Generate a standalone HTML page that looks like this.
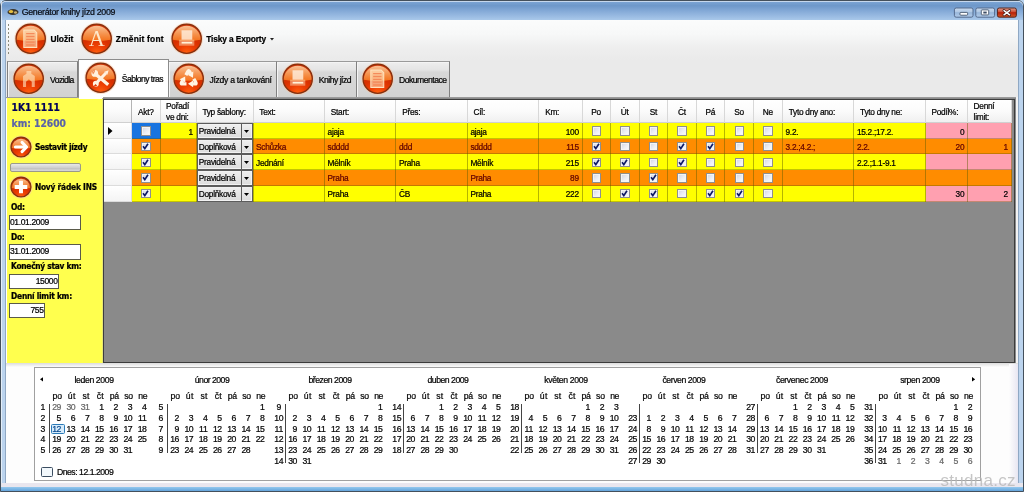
<!DOCTYPE html><html lang="cs"><head><meta charset="utf-8"><title>Generátor knihy jízd 2009</title><style>
*{box-sizing:border-box;margin:0;padding:0}
html,body{width:1024px;height:492px;overflow:hidden;background:#b9d3ee}
body{position:relative;font-family:'Liberation Sans', 'DejaVu Sans', sans-serif;font-size:8px;color:#000;filter:blur(0.45px)}
.a{position:absolute}
.t{position:absolute;white-space:nowrap;line-height:1;-webkit-text-stroke:0.22px currentColor}
</style></head><body>
<div class="a" style="left:0px;top:0px;width:1024px;height:492px;background:#bcd4ee;border:1px solid #44505c;border-radius:6px 6px 0 0;"></div>
<div class="a" style="left:1px;top:1px;width:1022px;height:19px;background:linear-gradient(#7ea6d6 0%,#6e98ca 25%,#86abd8 55%,#a9c8ea 100%);border-radius:5px 5px 0 0;box-shadow:inset 0 0.8px 0 rgba(255,255,255,0.75);"></div>
<div class="a" style="left:1px;top:1px;width:0.8px;height:490px;background:rgba(255,255,255,0.6);"></div>
<div class="a" style="left:6px;top:20px;width:1012px;height:465px;background:#f1f1f1;"></div>
<div class="a" style="left:5px;top:20px;width:1px;height:466px;background:#8fa8c4;"></div>
<div class="a" style="left:1018px;top:20px;width:1px;height:466px;background:#8fa8c4;"></div>
<div class="a" style="left:5px;top:485px;width:1014px;height:1px;background:#8fa8c4;"></div>
<svg class="a" style="left:7px;top:8px" width="12" height="8" viewBox="0 0 12 8"><ellipse cx="6" cy="4" rx="5.5" ry="3" fill="#3a3428"/><ellipse cx="4" cy="3.5" rx="2.2" ry="1.5" fill="#e8c040"/><ellipse cx="8.5" cy="4.5" rx="1.6" ry="1.2" fill="#c8b070"/></svg>
<div class="t" style="left:21.7px;top:8.1px;font-size:8.8px;color:#080c14;letter-spacing:-0.29px;">Generátor knihy jízd 2009</div>
<svg class="a" style="left:950px;top:5px" width="70" height="16" viewBox="950 5 70 16"><defs><linearGradient id="cbb" x1="0" y1="0" x2="0" y2="1"><stop offset="0" stop-color="#c9daee"/><stop offset="0.45" stop-color="#b0c8e4"/><stop offset="0.5" stop-color="#98b6da"/><stop offset="1" stop-color="#b2ccea"/></linearGradient><linearGradient id="cbr" x1="0" y1="0" x2="0" y2="1"><stop offset="0" stop-color="#e0a090"/><stop offset="0.45" stop-color="#cc4a30"/><stop offset="0.5" stop-color="#b82008"/><stop offset="1" stop-color="#d05828"/></linearGradient></defs><rect x="954.4" y="8" width="18.6" height="9.2" rx="1.8" fill="url(#cbb)" stroke="#4d6284" stroke-width="0.9"/><rect x="975.8" y="8" width="18.8" height="9.2" rx="1.8" fill="url(#cbb)" stroke="#4d6284" stroke-width="0.9"/><rect x="997.4" y="8" width="19" height="9.2" rx="1.8" fill="url(#cbr)" stroke="#4a1c14" stroke-width="0.9"/><rect x="960" y="12.4" width="7.6" height="2.8" rx="0.8" fill="#fff" stroke="#35455c" stroke-width="0.8"/><rect x="981.3" y="9.9" width="7.4" height="5" rx="0.6" fill="#fff" stroke="#35455c" stroke-width="0.8"/><rect x="983.3" y="11.6" width="3.4" height="1.9" fill="#3c4c64"/><path d="M1004 10.6 L1009.6 14.8 M1009.6 10.6 L1004 14.8" stroke="#3a1410" stroke-width="2.8" stroke-linecap="round"/><path d="M1004 10.6 L1009.6 14.8 M1009.6 10.6 L1004 14.8" stroke="#fff" stroke-width="1.5" stroke-linecap="round"/></svg>
<div class="a" style="left:6px;top:20px;width:1012px;height:40px;background:linear-gradient(#fbfcfc 0%,#f7f8f8 35%,#eeeeee 70%,#eaeaea 100%);"></div>
<div class="a" style="left:8px;top:24px;width:1px;height:1.5px;background:#8a8a7a;"></div>
<div class="a" style="left:8px;top:28px;width:1px;height:1.5px;background:#8a8a7a;"></div>
<div class="a" style="left:8px;top:32px;width:1px;height:1.5px;background:#8a8a7a;"></div>
<div class="a" style="left:8px;top:36px;width:1px;height:1.5px;background:#8a8a7a;"></div>
<div class="a" style="left:8px;top:40px;width:1px;height:1.5px;background:#8a8a7a;"></div>
<div class="a" style="left:8px;top:44px;width:1px;height:1.5px;background:#8a8a7a;"></div>
<div class="a" style="left:8px;top:48px;width:1px;height:1.5px;background:#8a8a7a;"></div>
<div class="a" style="left:8px;top:52px;width:1px;height:1.5px;background:#8a8a7a;"></div>
<svg class="a" style="left:14px;top:22.2px" width="33.4" height="33.4" viewBox="-16.7 -16.7 33.4 33.4"><defs><radialGradient id="g1" cx="0.5" cy="1.0" r="0.75"><stop offset="0" stop-color="#ff6210"/><stop offset="0.35" stop-color="#ee4004"/><stop offset="0.7" stop-color="#d83000"/><stop offset="1" stop-color="#cc3204"/></radialGradient><linearGradient id="h1" x1="0" y1="0" x2="0" y2="1"><stop offset="0" stop-color="#ffd0a4" stop-opacity="0.9"/><stop offset="1" stop-color="#ff8c28" stop-opacity="0.72"/></linearGradient></defs><circle r="16.3" fill="#f8c8a8" opacity="0.55"/><circle r="14.65" fill="url(#g1)" stroke="#84300e" stroke-width="1.3"/><path d="M-13.9 1 A13.9 13.9 0 0 1 13.9 1 Q0 3.344 -13.9 1Z" fill="url(#h1)"/><g transform="scale(1.01333)"><path d="M-6.8 -8.6 H3.4 L6 -6 V8.6 H-6.8Z" fill="#ffe6c4" fill-opacity="0.62" stroke="#ffe6c4" stroke-opacity="0.95" stroke-width="1"/><g stroke="#f48858" stroke-width="1.3" opacity="0.95"><path d="M-4.5 -5H3.8M-4.5 -2.2H3.8M-4.5 0.6H3.8M-4.5 3.4H3.8M-4.5 6.2H3.8"/></g></g></svg>
<svg class="a" style="left:79.7px;top:22.2px" width="33.4" height="33.4" viewBox="-16.7 -16.7 33.4 33.4"><defs><radialGradient id="g2" cx="0.5" cy="1.0" r="0.75"><stop offset="0" stop-color="#ff6210"/><stop offset="0.35" stop-color="#ee4004"/><stop offset="0.7" stop-color="#d83000"/><stop offset="1" stop-color="#cc3204"/></radialGradient><linearGradient id="h2" x1="0" y1="0" x2="0" y2="1"><stop offset="0" stop-color="#ffd0a4" stop-opacity="0.9"/><stop offset="1" stop-color="#ff8c28" stop-opacity="0.72"/></linearGradient></defs><circle r="16.3" fill="#f8c8a8" opacity="0.55"/><circle r="14.65" fill="url(#g2)" stroke="#84300e" stroke-width="1.3"/><path d="M-13.9 1 A13.9 13.9 0 0 1 13.9 1 Q0 3.344 -13.9 1Z" fill="url(#h2)"/><g transform="scale(1.01333)"><text x="0" y="7.5" text-anchor="middle" font-family="'Liberation Serif',serif" font-size="22" fill="#ffedd0" opacity="0.95">A</text></g></svg>
<svg class="a" style="left:169.8px;top:22.2px" width="33.4" height="33.4" viewBox="-16.7 -16.7 33.4 33.4"><defs><radialGradient id="g3" cx="0.5" cy="1.0" r="0.75"><stop offset="0" stop-color="#ff6210"/><stop offset="0.35" stop-color="#ee4004"/><stop offset="0.7" stop-color="#d83000"/><stop offset="1" stop-color="#cc3204"/></radialGradient><linearGradient id="h3" x1="0" y1="0" x2="0" y2="1"><stop offset="0" stop-color="#ffd0a4" stop-opacity="0.9"/><stop offset="1" stop-color="#ff8c28" stop-opacity="0.72"/></linearGradient></defs><circle r="16.3" fill="#f8c8a8" opacity="0.55"/><circle r="14.65" fill="url(#g3)" stroke="#84300e" stroke-width="1.3"/><path d="M-13.9 1 A13.9 13.9 0 0 1 13.9 1 Q0 3.344 -13.9 1Z" fill="url(#h3)"/><g transform="scale(1.01333)"><rect x="-5.1" y="-8.3" width="10.6" height="9.3" fill="#fff0e0" fill-opacity="0.8"/><rect x="-7.5" y="1" width="15" height="5.9" fill="#ffe6c4" fill-opacity="0.45"/><rect x="-5" y="3.1" width="10.5" height="1.7" fill="#fff2d8"/></g></svg>
<div class="t" style="left:50.4px;top:35.1px;font-size:8.4px;font-weight:bold;color:#000;letter-spacing:0.034px;">Uložit</div>
<div class="t" style="left:115.8px;top:35.1px;font-size:8.4px;font-weight:bold;color:#000;letter-spacing:0.219px;">Změnit font</div>
<div class="t" style="left:206.3px;top:35.1px;font-size:8.4px;font-weight:bold;color:#000;letter-spacing:-0.138px;">Tisky a Exporty</div>
<svg class="a" style="left:269.8px;top:38.4px" width="4" height="2.6" viewBox="0 0 4 2.6"><path d="M0 0 H4 L2 2.6Z" fill="#222"/></svg>
<div class="a" style="left:6px;top:60px;width:1012px;height:38px;background:#eaeaea;"></div>
<div class="a" style="left:6.5px;top:61px;width:71.5px;height:36.7px;background:linear-gradient(#eeeeee 0%,#e4e4e4 22%,#d8d8d8 28%,#d2d2d2 100%);border:1px solid #808080;border-top-color:#9a9a9a;border-bottom:none;box-shadow:inset 1px 1px 0 #f4f4f4;"></div>
<div class="a" style="left:167.5px;top:61px;width:109px;height:36.7px;background:linear-gradient(#eeeeee 0%,#e4e4e4 22%,#d8d8d8 28%,#d2d2d2 100%);border:1px solid #808080;border-top-color:#9a9a9a;border-bottom:none;box-shadow:inset 1px 1px 0 #f4f4f4;"></div>
<div class="a" style="left:276px;top:61px;width:80.5px;height:36.7px;background:linear-gradient(#eeeeee 0%,#e4e4e4 22%,#d8d8d8 28%,#d2d2d2 100%);border:1px solid #808080;border-top-color:#9a9a9a;border-bottom:none;box-shadow:inset 1px 1px 0 #f4f4f4;"></div>
<div class="a" style="left:356px;top:61px;width:94px;height:36.7px;background:linear-gradient(#eeeeee 0%,#e4e4e4 22%,#d8d8d8 28%,#d2d2d2 100%);border:1px solid #808080;border-top-color:#9a9a9a;border-bottom:none;box-shadow:inset 1px 1px 0 #f4f4f4;"></div>
<div class="a" style="left:77.5px;top:59.3px;width:91px;height:39px;background:#fff;border:1px solid #8c8c8c;border-bottom:none;"></div>
<svg class="a" style="left:11.8px;top:62.1px" width="33.4" height="33.4" viewBox="-16.7 -16.7 33.4 33.4"><defs><radialGradient id="g4" cx="0.5" cy="1.0" r="0.75"><stop offset="0" stop-color="#ff6210"/><stop offset="0.35" stop-color="#ee4004"/><stop offset="0.7" stop-color="#d83000"/><stop offset="1" stop-color="#cc3204"/></radialGradient><linearGradient id="h4" x1="0" y1="0" x2="0" y2="1"><stop offset="0" stop-color="#ffd0a4" stop-opacity="0.9"/><stop offset="1" stop-color="#ff8c28" stop-opacity="0.72"/></linearGradient></defs><circle r="16.3" fill="#f8c8a8" opacity="0.55"/><circle r="14.65" fill="url(#g4)" stroke="#84300e" stroke-width="1.3"/><path d="M-13.9 1 A13.9 13.9 0 0 1 13.9 1 Q0 3.344 -13.9 1Z" fill="url(#h4)"/><g transform="scale(1.01333)"><g fill="#ffe6c4" fill-opacity="0.62"><path d="M-5.6 8.2 V-2.6 L-2.2 -5 V-7.7 H2.6 V-5 L6 -2.6 V8.2 H3 V3 L0.2 0.6 L-2.6 3 V8.2Z"/></g></g></svg>
<svg class="a" style="left:83.5px;top:60.8px" width="33.4" height="33.4" viewBox="-16.7 -16.7 33.4 33.4"><defs><radialGradient id="g5" cx="0.5" cy="1.0" r="0.75"><stop offset="0" stop-color="#ff6210"/><stop offset="0.35" stop-color="#ee4004"/><stop offset="0.7" stop-color="#d83000"/><stop offset="1" stop-color="#cc3204"/></radialGradient><linearGradient id="h5" x1="0" y1="0" x2="0" y2="1"><stop offset="0" stop-color="#ffd0a4" stop-opacity="0.9"/><stop offset="1" stop-color="#ff8c28" stop-opacity="0.72"/></linearGradient></defs><circle r="16.3" fill="#f8c8a8" opacity="0.55"/><circle r="14.65" fill="url(#g5)" stroke="#84300e" stroke-width="1.3"/><path d="M-13.9 1 A13.9 13.9 0 0 1 13.9 1 Q0 3.344 -13.9 1Z" fill="url(#h5)"/><g transform="scale(1.01333)"><g stroke="#fff2e0" stroke-linecap="butt" fill="none"><path d="M-5.2 -3.6 L7.4 7" stroke-width="3.3"/><path d="M5.2 -4.6 L-4.6 5.6" stroke-width="2.9"/></g><g fill="#fff2e0"><circle cx="-5.8" cy="-4.2" r="3.3"/><circle cx="-4.8" cy="6" r="2.9"/><path d="M3.6 -5.8 L7.8 -7.4 L6.6 -3Z"/></g><path d="M-9.5 -8 L-6 -5.2 L-7.6 -3.2 Z M-8.6 -7.6 L-5.8 -8.6 L-5.6 -5.4Z" fill="#f29058"/><path d="M-7.6 9 L-5 6.2 L-3.4 8.2Z" fill="#e23804"/></g></svg>
<svg class="a" style="left:172px;top:62.1px" width="33.4" height="33.4" viewBox="-16.7 -16.7 33.4 33.4"><defs><radialGradient id="g6" cx="0.5" cy="1.0" r="0.75"><stop offset="0" stop-color="#ff6210"/><stop offset="0.35" stop-color="#ee4004"/><stop offset="0.7" stop-color="#d83000"/><stop offset="1" stop-color="#cc3204"/></radialGradient><linearGradient id="h6" x1="0" y1="0" x2="0" y2="1"><stop offset="0" stop-color="#ffd0a4" stop-opacity="0.9"/><stop offset="1" stop-color="#ff8c28" stop-opacity="0.72"/></linearGradient></defs><circle r="16.3" fill="#f8c8a8" opacity="0.55"/><circle r="14.65" fill="url(#g6)" stroke="#84300e" stroke-width="1.3"/><path d="M-13.9 1 A13.9 13.9 0 0 1 13.9 1 Q0 3.344 -13.9 1Z" fill="url(#h6)"/><g transform="scale(1.01333)"><g transform="translate(0,0.6)"><g><path d="M-2.81 -4.14 L-0.9 -7.6 Q0 -9.2 0.9 -7.6 L1.9 -5.8" fill="none" stroke="#fff4e4" stroke-width="3.3"/><path d="M4.6 -7.7 L-1.1 -4.4 L4.2 -1.6 Z" fill="#fff4e4"/></g><g transform="rotate(120)"><path d="M-2.81 -4.14 L-0.9 -7.6 Q0 -9.2 0.9 -7.6 L1.9 -5.8" fill="none" stroke="#fff4e4" stroke-width="3.3"/><path d="M4.6 -7.7 L-1.1 -4.4 L4.2 -1.6 Z" fill="#fff4e4"/></g><g transform="rotate(240)"><path d="M-2.81 -4.14 L-0.9 -7.6 Q0 -9.2 0.9 -7.6 L1.9 -5.8" fill="none" stroke="#fff4e4" stroke-width="3.3"/><path d="M4.6 -7.7 L-1.1 -4.4 L4.2 -1.6 Z" fill="#fff4e4"/></g></g></g></svg>
<svg class="a" style="left:280.6px;top:62.3px" width="33.4" height="33.4" viewBox="-16.7 -16.7 33.4 33.4"><defs><radialGradient id="g7" cx="0.5" cy="1.0" r="0.75"><stop offset="0" stop-color="#ff6210"/><stop offset="0.35" stop-color="#ee4004"/><stop offset="0.7" stop-color="#d83000"/><stop offset="1" stop-color="#cc3204"/></radialGradient><linearGradient id="h7" x1="0" y1="0" x2="0" y2="1"><stop offset="0" stop-color="#ffd0a4" stop-opacity="0.9"/><stop offset="1" stop-color="#ff8c28" stop-opacity="0.72"/></linearGradient></defs><circle r="16.3" fill="#f8c8a8" opacity="0.55"/><circle r="14.65" fill="url(#g7)" stroke="#84300e" stroke-width="1.3"/><path d="M-13.9 1 A13.9 13.9 0 0 1 13.9 1 Q0 3.344 -13.9 1Z" fill="url(#h7)"/><g transform="scale(1.01333)"><rect x="-5.1" y="-8.3" width="10.6" height="9.3" fill="#fff0e0" fill-opacity="0.8"/><rect x="-7.5" y="1" width="15" height="5.9" fill="#ffe6c4" fill-opacity="0.45"/><rect x="-5" y="3.1" width="10.5" height="1.7" fill="#fff2d8"/></g></svg>
<svg class="a" style="left:360.8px;top:62.3px" width="33.4" height="33.4" viewBox="-16.7 -16.7 33.4 33.4"><defs><radialGradient id="g8" cx="0.5" cy="1.0" r="0.75"><stop offset="0" stop-color="#ff6210"/><stop offset="0.35" stop-color="#ee4004"/><stop offset="0.7" stop-color="#d83000"/><stop offset="1" stop-color="#cc3204"/></radialGradient><linearGradient id="h8" x1="0" y1="0" x2="0" y2="1"><stop offset="0" stop-color="#ffd0a4" stop-opacity="0.9"/><stop offset="1" stop-color="#ff8c28" stop-opacity="0.72"/></linearGradient></defs><circle r="16.3" fill="#f8c8a8" opacity="0.55"/><circle r="14.65" fill="url(#g8)" stroke="#84300e" stroke-width="1.3"/><path d="M-13.9 1 A13.9 13.9 0 0 1 13.9 1 Q0 3.344 -13.9 1Z" fill="url(#h8)"/><g transform="scale(1.01333)"><path d="M-6.8 -8.6 H3.4 L6 -6 V8.6 H-6.8Z" fill="#ffe6c4" fill-opacity="0.62" stroke="#ffe6c4" stroke-opacity="0.95" stroke-width="1"/><g stroke="#f48858" stroke-width="1.3" opacity="0.95"><path d="M-4.5 -5H3.8M-4.5 -2.2H3.8M-4.5 0.6H3.8M-4.5 3.4H3.8M-4.5 6.2H3.8"/></g></g></svg>
<div class="t" style="left:50px;top:76px;font-size:8.6px;color:#000;letter-spacing:-0.56px;">Vozidla</div>
<div class="t" style="left:121.8px;top:74.8px;font-size:8.6px;color:#000;letter-spacing:-0.548px;">Šablony tras</div>
<div class="t" style="left:209.5px;top:76px;font-size:8.6px;color:#000;letter-spacing:-0.288px;">Jízdy a tankování</div>
<div class="t" style="left:318.8px;top:76px;font-size:8.6px;color:#000;letter-spacing:-0.507px;">Knihy jízd</div>
<div class="t" style="left:399px;top:76px;font-size:8.6px;color:#000;letter-spacing:-0.503px;">Dokumentace</div>
<div class="a" style="left:6px;top:97.3px;width:1012px;height:1.2px;background:#9a9a9a;"></div>
<div class="a" style="left:6px;top:98.5px;width:1012px;height:265px;background:#fff;"></div>
<div class="a" style="left:6.5px;top:97.8px;width:96px;height:265.5px;background:#ffff4e;"></div>
<div class="a" style="left:78.5px;top:97px;width:24px;height:2px;background:#fff;"></div>
<div class="t" style="left:11.6px;top:102.5px;font-size:10.2px;font-weight:bold;font-family:'DejaVu Sans Condensed', 'DejaVu Sans', 'Liberation Sans', sans-serif;color:#00005a;letter-spacing:-0.033px;">1K1 1111</div>
<div class="t" style="left:11.6px;top:119.3px;font-size:10.2px;font-weight:bold;font-family:'DejaVu Sans Condensed', 'DejaVu Sans', 'Liberation Sans', sans-serif;color:#5a64a8;letter-spacing:0.001px;">km: 12600</div>
<svg class="a" style="left:9.2px;top:135.1px" width="24" height="24" viewBox="-12 -12 24 24"><defs><radialGradient id="g9" cx="0.5" cy="1.0" r="0.75"><stop offset="0" stop-color="#ff6210"/><stop offset="0.35" stop-color="#ee4004"/><stop offset="0.7" stop-color="#d83000"/><stop offset="1" stop-color="#cc3204"/></radialGradient><linearGradient id="h9" x1="0" y1="0" x2="0" y2="1"><stop offset="0" stop-color="#ffd0a4" stop-opacity="0.9"/><stop offset="1" stop-color="#ff8c28" stop-opacity="0.72"/></linearGradient></defs><circle r="11.6" fill="#f8c8a8" opacity="0.55"/><circle r="9.95" fill="url(#g9)" stroke="#84300e" stroke-width="1.3"/><path d="M-9.2 1 A9.2 9.2 0 0 1 9.2 1 Q0 2.31 -9.2 1Z" fill="url(#h9)"/><g transform="scale(0.7)"><g fill="none" stroke="#fff" stroke-width="4.4" stroke-linecap="round" stroke-linejoin="round"><path d="M-8 0 H7"/><path d="M1.5 -6.5 L8 0 L1.5 6.5"/></g></g></svg>
<div class="t" style="left:34.9px;top:142.75px;font-size:8.3px;font-weight:bold;font-family:'DejaVu Sans Condensed', 'DejaVu Sans', 'Liberation Sans', sans-serif;color:#000;letter-spacing:-0.318px;">Sestavit jízdy</div>
<div class="a" style="left:9.5px;top:162.6px;width:71px;height:9.6px;background:linear-gradient(#e8e8e8,#d0d0d0 50%,#c0c0c0 55%,#d8d8d8);border:1px solid #9a9a8a;border-radius:2px;"></div>
<svg class="a" style="left:9.2px;top:175.4px" width="24" height="24" viewBox="-12 -12 24 24"><defs><radialGradient id="g10" cx="0.5" cy="1.0" r="0.75"><stop offset="0" stop-color="#ff6210"/><stop offset="0.35" stop-color="#ee4004"/><stop offset="0.7" stop-color="#d83000"/><stop offset="1" stop-color="#cc3204"/></radialGradient><linearGradient id="h10" x1="0" y1="0" x2="0" y2="1"><stop offset="0" stop-color="#ffd0a4" stop-opacity="0.9"/><stop offset="1" stop-color="#ff8c28" stop-opacity="0.72"/></linearGradient></defs><circle r="11.6" fill="#f8c8a8" opacity="0.55"/><circle r="9.95" fill="url(#g10)" stroke="#84300e" stroke-width="1.3"/><path d="M-9.2 1 A9.2 9.2 0 0 1 9.2 1 Q0 2.31 -9.2 1Z" fill="url(#h10)"/><g transform="scale(0.7)"><g stroke="#fff" stroke-width="5.6" stroke-linecap="butt"><path d="M-9 0H9M0 -9V9"/></g></g></svg>
<div class="t" style="left:34.9px;top:183.25px;font-size:8.3px;font-weight:bold;font-family:'DejaVu Sans Condensed', 'DejaVu Sans', 'Liberation Sans', sans-serif;color:#000;letter-spacing:-0.2px;">Nový řádek INS</div>
<div class="t" style="left:11.1px;top:203.45px;font-size:8.3px;font-weight:bold;font-family:'DejaVu Sans Condensed', 'DejaVu Sans', 'Liberation Sans', sans-serif;color:#000;letter-spacing:-0.396px;">Od:</div>
<div class="a" style="left:8.7px;top:214.5px;width:72px;height:15.5px;background:#fff;border:1px solid #5a5a4a;"></div>
<div class="t" style="left:10px;top:217.75px;font-size:8.5px;color:#000;letter-spacing:-0.365px;">01.01.2009</div>
<div class="t" style="left:11.1px;top:233.05px;font-size:8.3px;font-weight:bold;font-family:'DejaVu Sans Condensed', 'DejaVu Sans', 'Liberation Sans', sans-serif;color:#000;letter-spacing:-0.376px;">Do:</div>
<div class="a" style="left:8.7px;top:244.1px;width:72px;height:15.5px;background:#fff;border:1px solid #5a5a4a;"></div>
<div class="t" style="left:10px;top:247.25px;font-size:8.5px;color:#000;letter-spacing:-0.365px;">31.01.2009</div>
<div class="t" style="left:11.1px;top:262.45px;font-size:8.3px;font-weight:bold;font-family:'DejaVu Sans Condensed', 'DejaVu Sans', 'Liberation Sans', sans-serif;color:#000;letter-spacing:-0.268px;">Konečný stav km:</div>
<div class="a" style="left:8.7px;top:273.5px;width:50.8px;height:15.2px;background:#fff;border:1px solid #5a5a4a;"></div>
<div class="t" style="left:35.7px;top:276.75px;font-size:8.5px;color:#000;letter-spacing:-0.348px;">15000</div>
<div class="t" style="left:11.1px;top:291.85px;font-size:8.3px;font-weight:bold;font-family:'DejaVu Sans Condensed', 'DejaVu Sans', 'Liberation Sans', sans-serif;color:#000;letter-spacing:-0.239px;">Denní limit km:</div>
<div class="a" style="left:8.7px;top:302.6px;width:36.3px;height:15.6px;background:#fff;border:1px solid #5a5a4a;"></div>
<div class="t" style="left:30.4px;top:305.95px;font-size:8.5px;color:#000;letter-spacing:-0.329px;">755</div>
<div class="a" style="left:102.3px;top:97.5px;width:913.7px;height:266px;background:#8a8a8a;border:1px solid #8a8a8a;border-left-color:#e8e870;box-shadow:inset 0 0 0 1px #3c3c3c;"></div>
<div class="a" style="left:1016px;top:97px;width:2px;height:267px;background:#f2f2f2;"></div>
<div class="a" style="left:104px;top:99.5px;width:907.8px;height:23.7px;background:linear-gradient(#ffffff 0%,#fbfbfb 50%,#f0f0f0 100%);border-bottom:1px solid #d0d0d0;"></div>
<div class="a" style="left:131.3px;top:99.5px;width:1px;height:23.7px;background:#b4b4b4;"></div>
<div class="a" style="left:159.6px;top:99.5px;width:1px;height:23.7px;background:#d8d8d8;"></div>
<div class="t" style="left:131.665px;top:107.5px;width:28.3px;text-align:center;font-size:8.3px;color:#000;letter-spacing:-0.27px;">Akt?</div>
<div class="a" style="left:195.6px;top:99.5px;width:1px;height:23.7px;background:#d8d8d8;"></div>
<div class="t" style="left:166.1px;top:102.2px;font-size:8.3px;color:#000;letter-spacing:-0.27px;">Pořadí</div>
<div class="t" style="left:166.1px;top:112.8px;font-size:8.3px;color:#000;letter-spacing:-0.27px;">ve dni:</div>
<div class="a" style="left:252.5px;top:99.5px;width:1px;height:23.7px;background:#d8d8d8;"></div>
<div class="t" style="left:202.4px;top:107.5px;font-size:8.3px;color:#000;letter-spacing:-0.27px;">Typ šablony:</div>
<div class="a" style="left:324px;top:99.5px;width:1px;height:23.7px;background:#d8d8d8;"></div>
<div class="t" style="left:259.3px;top:107.5px;font-size:8.3px;color:#000;letter-spacing:-0.27px;">Text:</div>
<div class="a" style="left:395.4px;top:99.5px;width:1px;height:23.7px;background:#d8d8d8;"></div>
<div class="t" style="left:330.8px;top:107.5px;font-size:8.3px;color:#000;letter-spacing:-0.27px;">Start:</div>
<div class="a" style="left:466.8px;top:99.5px;width:1px;height:23.7px;background:#d8d8d8;"></div>
<div class="t" style="left:402.2px;top:107.5px;font-size:8.3px;color:#000;letter-spacing:-0.27px;">Přes:</div>
<div class="a" style="left:538.4px;top:99.5px;width:1px;height:23.7px;background:#d8d8d8;"></div>
<div class="t" style="left:473.6px;top:107.5px;font-size:8.3px;color:#000;letter-spacing:-0.27px;">Cíl:</div>
<div class="a" style="left:581.6px;top:99.5px;width:1px;height:23.7px;background:#d8d8d8;"></div>
<div class="t" style="left:545.2px;top:107.5px;font-size:8.3px;color:#000;letter-spacing:-0.27px;">Km:</div>
<div class="a" style="left:610px;top:99.5px;width:1px;height:23.7px;background:#d8d8d8;"></div>
<div class="t" style="left:581.965px;top:107.5px;width:28.4px;text-align:center;font-size:8.3px;color:#000;letter-spacing:-0.27px;">Po</div>
<div class="a" style="left:638.7px;top:99.5px;width:1px;height:23.7px;background:#d8d8d8;"></div>
<div class="t" style="left:610.365px;top:107.5px;width:28.7px;text-align:center;font-size:8.3px;color:#000;letter-spacing:-0.27px;">Út</div>
<div class="a" style="left:667.4px;top:99.5px;width:1px;height:23.7px;background:#d8d8d8;"></div>
<div class="t" style="left:639.065px;top:107.5px;width:28.7px;text-align:center;font-size:8.3px;color:#000;letter-spacing:-0.27px;">St</div>
<div class="a" style="left:695.6px;top:99.5px;width:1px;height:23.7px;background:#d8d8d8;"></div>
<div class="t" style="left:667.765px;top:107.5px;width:28.2px;text-align:center;font-size:8.3px;color:#000;letter-spacing:-0.27px;">Čt</div>
<div class="a" style="left:724.4px;top:99.5px;width:1px;height:23.7px;background:#d8d8d8;"></div>
<div class="t" style="left:695.965px;top:107.5px;width:28.8px;text-align:center;font-size:8.3px;color:#000;letter-spacing:-0.27px;">Pá</div>
<div class="a" style="left:753.1px;top:99.5px;width:1px;height:23.7px;background:#d8d8d8;"></div>
<div class="t" style="left:724.765px;top:107.5px;width:28.7px;text-align:center;font-size:8.3px;color:#000;letter-spacing:-0.27px;">So</div>
<div class="a" style="left:781.9px;top:99.5px;width:1px;height:23.7px;background:#d8d8d8;"></div>
<div class="t" style="left:753.465px;top:107.5px;width:28.8px;text-align:center;font-size:8.3px;color:#000;letter-spacing:-0.27px;">Ne</div>
<div class="a" style="left:853.3px;top:99.5px;width:1px;height:23.7px;background:#d8d8d8;"></div>
<div class="t" style="left:788.7px;top:107.5px;font-size:8.3px;color:#000;letter-spacing:-0.27px;">Tyto dny ano:</div>
<div class="a" style="left:924.7px;top:99.5px;width:1px;height:23.7px;background:#d8d8d8;"></div>
<div class="t" style="left:860.1px;top:107.5px;font-size:8.3px;color:#000;letter-spacing:-0.27px;">Tyto dny ne:</div>
<div class="a" style="left:967.1px;top:99.5px;width:1px;height:23.7px;background:#d8d8d8;"></div>
<div class="t" style="left:931.5px;top:107.5px;font-size:8.3px;color:#000;letter-spacing:-0.27px;">Podíl%:</div>
<div class="a" style="left:1010.8px;top:99.5px;width:1px;height:23.7px;background:#d8d8d8;"></div>
<div class="t" style="left:973.6px;top:102.2px;font-size:8.3px;color:#000;letter-spacing:-0.27px;">Denní</div>
<div class="t" style="left:973.6px;top:112.8px;font-size:8.3px;color:#000;letter-spacing:-0.27px;">limit:</div>
<div class="a" style="left:104px;top:123.2px;width:28.3px;height:15.7px;background:linear-gradient(#fff,#f4f4f4);border-bottom:1px solid #dcdcdc;border-right:1px solid #dcdcdc;"></div>
<svg class="a" style="left:108px;top:127.05px" width="5" height="8"><path d="M0 0 L4.5 4 L0 8Z" fill="#000"/></svg>
<div class="a" style="left:132.3px;top:123.2px;width:879.5px;height:15.7px;background:#ffff00;"></div>
<div class="a" style="left:925.7px;top:123.2px;width:86.1px;height:15.7px;background:#ffa0b0;"></div>
<div class="a" style="left:132.3px;top:123.2px;width:28.3px;height:15.7px;background:#1874e0;"></div>
<div class="a" style="left:159.6px;top:123.2px;width:1px;height:15.7px;background:rgba(90,90,0,0.45);"></div>
<div class="a" style="left:195.6px;top:123.2px;width:1px;height:15.7px;background:rgba(90,90,0,0.45);"></div>
<div class="a" style="left:252.5px;top:123.2px;width:1px;height:15.7px;background:rgba(90,90,0,0.45);"></div>
<div class="a" style="left:324px;top:123.2px;width:1px;height:15.7px;background:rgba(90,90,0,0.45);"></div>
<div class="a" style="left:395.4px;top:123.2px;width:1px;height:15.7px;background:rgba(90,90,0,0.45);"></div>
<div class="a" style="left:466.8px;top:123.2px;width:1px;height:15.7px;background:rgba(90,90,0,0.45);"></div>
<div class="a" style="left:538.4px;top:123.2px;width:1px;height:15.7px;background:rgba(90,90,0,0.45);"></div>
<div class="a" style="left:581.6px;top:123.2px;width:1px;height:15.7px;background:rgba(90,90,0,0.45);"></div>
<div class="a" style="left:610px;top:123.2px;width:1px;height:15.7px;background:rgba(90,90,0,0.45);"></div>
<div class="a" style="left:638.7px;top:123.2px;width:1px;height:15.7px;background:rgba(90,90,0,0.45);"></div>
<div class="a" style="left:667.4px;top:123.2px;width:1px;height:15.7px;background:rgba(90,90,0,0.45);"></div>
<div class="a" style="left:695.6px;top:123.2px;width:1px;height:15.7px;background:rgba(90,90,0,0.45);"></div>
<div class="a" style="left:724.4px;top:123.2px;width:1px;height:15.7px;background:rgba(90,90,0,0.45);"></div>
<div class="a" style="left:753.1px;top:123.2px;width:1px;height:15.7px;background:rgba(90,90,0,0.45);"></div>
<div class="a" style="left:781.9px;top:123.2px;width:1px;height:15.7px;background:rgba(90,90,0,0.45);"></div>
<div class="a" style="left:853.3px;top:123.2px;width:1px;height:15.7px;background:rgba(90,90,0,0.45);"></div>
<div class="a" style="left:924.7px;top:123.2px;width:1px;height:15.7px;background:rgba(90,90,0,0.45);"></div>
<div class="a" style="left:967.1px;top:123.2px;width:1px;height:15.7px;background:rgba(90,90,0,0.45);"></div>
<div class="a" style="left:1010.8px;top:123.2px;width:1px;height:15.7px;background:rgba(90,90,0,0.45);"></div>
<div class="a" style="left:132.3px;top:137.9px;width:879.5px;height:1px;background:rgba(90,90,0,0.35);"></div>
<div class="a" style="left:141.25px;top:126.35px;width:9.4px;height:9.4px;border:1px solid #8e8f8f;background:linear-gradient(135deg,#d2d4e0,#eceef4 55%,#fcfcfe);box-shadow:inset 0 0 0 1px #f4f4f4"></div>
<div class="t" style="right:831.27px;top:127.5px;font-size:8.3px;color:#000;letter-spacing:-0.27px;">1</div>
<div class="a" style="left:196.6px;top:122.9px;width:56.6px;height:16px;background:linear-gradient(#efefef,#e6e6e6 50%,#dcdcdc);border:1px solid #5c5c5c;box-shadow:inset 0 0 0 1px #f2f2f2;"></div>
<div class="a" style="left:240.9px;top:123.2px;width:1px;height:15.7px;background:#5c5c5c;"></div>
<svg class="a" style="left:244.3px;top:130.05px" width="5" height="3"><path d="M0 0 H5 L2.5 3Z" fill="#000"/></svg>
<div class="t" style="left:198.8px;top:127.3px;font-size:8.3px;color:#000;letter-spacing:-0.27px;">Pravidelná</div>
<div class="t" style="left:327.6px;top:127.5px;font-size:8.3px;color:#000;letter-spacing:-0.27px;">ajaja</div>
<div class="t" style="left:470.4px;top:127.5px;font-size:8.3px;color:#000;letter-spacing:-0.27px;">ajaja</div>
<div class="t" style="right:445.27px;top:127.5px;font-size:8.3px;color:#000;letter-spacing:-0.27px;">100</div>
<div class="a" style="left:591.6px;top:126.35px;width:9.4px;height:9.4px;border:1px solid #8e8f8f;background:linear-gradient(135deg,#d2d4e0,#eceef4 55%,#fcfcfe);box-shadow:inset 0 0 0 1px #f4f4f4"></div>
<div class="a" style="left:620.15px;top:126.35px;width:9.4px;height:9.4px;border:1px solid #8e8f8f;background:linear-gradient(135deg,#d2d4e0,#eceef4 55%,#fcfcfe);box-shadow:inset 0 0 0 1px #f4f4f4"></div>
<div class="a" style="left:648.85px;top:126.35px;width:9.4px;height:9.4px;border:1px solid #8e8f8f;background:linear-gradient(135deg,#d2d4e0,#eceef4 55%,#fcfcfe);box-shadow:inset 0 0 0 1px #f4f4f4"></div>
<div class="a" style="left:677.3px;top:126.35px;width:9.4px;height:9.4px;border:1px solid #8e8f8f;background:linear-gradient(135deg,#d2d4e0,#eceef4 55%,#fcfcfe);box-shadow:inset 0 0 0 1px #f4f4f4"></div>
<div class="a" style="left:705.8px;top:126.35px;width:9.4px;height:9.4px;border:1px solid #8e8f8f;background:linear-gradient(135deg,#d2d4e0,#eceef4 55%,#fcfcfe);box-shadow:inset 0 0 0 1px #f4f4f4"></div>
<div class="a" style="left:734.55px;top:126.35px;width:9.4px;height:9.4px;border:1px solid #8e8f8f;background:linear-gradient(135deg,#d2d4e0,#eceef4 55%,#fcfcfe);box-shadow:inset 0 0 0 1px #f4f4f4"></div>
<div class="a" style="left:763.3px;top:126.35px;width:9.4px;height:9.4px;border:1px solid #8e8f8f;background:linear-gradient(135deg,#d2d4e0,#eceef4 55%,#fcfcfe);box-shadow:inset 0 0 0 1px #f4f4f4"></div>
<div class="t" style="left:785.5px;top:127.5px;font-size:8.3px;color:#000;letter-spacing:-0.27px;">9.2.</div>
<div class="t" style="left:856.9px;top:127.5px;font-size:8.3px;color:#000;letter-spacing:-0.27px;">15.2.;17.2.</div>
<div class="t" style="right:59.77px;top:127.5px;font-size:8.3px;color:#000;letter-spacing:-0.27px;">0</div>
<div class="a" style="left:104px;top:138.9px;width:28.3px;height:15.5px;background:linear-gradient(#fff,#f4f4f4);border-bottom:1px solid #dcdcdc;border-right:1px solid #dcdcdc;"></div>
<div class="a" style="left:132.3px;top:138.9px;width:879.5px;height:15.5px;background:#ff8c00;"></div>
<div class="a" style="left:159.6px;top:138.9px;width:1px;height:15.5px;background:rgba(90,90,0,0.45);"></div>
<div class="a" style="left:195.6px;top:138.9px;width:1px;height:15.5px;background:rgba(90,90,0,0.45);"></div>
<div class="a" style="left:252.5px;top:138.9px;width:1px;height:15.5px;background:rgba(90,90,0,0.45);"></div>
<div class="a" style="left:324px;top:138.9px;width:1px;height:15.5px;background:rgba(90,90,0,0.45);"></div>
<div class="a" style="left:395.4px;top:138.9px;width:1px;height:15.5px;background:rgba(90,90,0,0.45);"></div>
<div class="a" style="left:466.8px;top:138.9px;width:1px;height:15.5px;background:rgba(90,90,0,0.45);"></div>
<div class="a" style="left:538.4px;top:138.9px;width:1px;height:15.5px;background:rgba(90,90,0,0.45);"></div>
<div class="a" style="left:581.6px;top:138.9px;width:1px;height:15.5px;background:rgba(90,90,0,0.45);"></div>
<div class="a" style="left:610px;top:138.9px;width:1px;height:15.5px;background:rgba(90,90,0,0.45);"></div>
<div class="a" style="left:638.7px;top:138.9px;width:1px;height:15.5px;background:rgba(90,90,0,0.45);"></div>
<div class="a" style="left:667.4px;top:138.9px;width:1px;height:15.5px;background:rgba(90,90,0,0.45);"></div>
<div class="a" style="left:695.6px;top:138.9px;width:1px;height:15.5px;background:rgba(90,90,0,0.45);"></div>
<div class="a" style="left:724.4px;top:138.9px;width:1px;height:15.5px;background:rgba(90,90,0,0.45);"></div>
<div class="a" style="left:753.1px;top:138.9px;width:1px;height:15.5px;background:rgba(90,90,0,0.45);"></div>
<div class="a" style="left:781.9px;top:138.9px;width:1px;height:15.5px;background:rgba(90,90,0,0.45);"></div>
<div class="a" style="left:853.3px;top:138.9px;width:1px;height:15.5px;background:rgba(90,90,0,0.45);"></div>
<div class="a" style="left:924.7px;top:138.9px;width:1px;height:15.5px;background:rgba(90,90,0,0.45);"></div>
<div class="a" style="left:967.1px;top:138.9px;width:1px;height:15.5px;background:rgba(90,90,0,0.45);"></div>
<div class="a" style="left:1010.8px;top:138.9px;width:1px;height:15.5px;background:rgba(90,90,0,0.45);"></div>
<div class="a" style="left:132.3px;top:153.4px;width:879.5px;height:1px;background:rgba(90,90,0,0.35);"></div>
<div class="a" style="left:141.25px;top:141.95px;width:9.4px;height:9.4px;border:1px solid #8e8f8f;background:linear-gradient(135deg,#d2d4e0,#eceef4 55%,#fcfcfe);box-shadow:inset 0 0 0 1px #f4f4f4"><svg class="a" style="left:0.2px;top:0.2px" width="7" height="7" viewBox="0 0 8 8"><path d="M1.2 3.6 L3.2 6.4 L6.8 0.8" fill="none" stroke="#0e1a66" stroke-width="1.9"/></svg></div>
<div class="a" style="left:196.6px;top:138.6px;width:56.6px;height:15.8px;background:linear-gradient(#efefef,#e6e6e6 50%,#dcdcdc);border:1px solid #5c5c5c;box-shadow:inset 0 0 0 1px #f2f2f2;"></div>
<div class="a" style="left:240.9px;top:138.9px;width:1px;height:15.5px;background:#5c5c5c;"></div>
<svg class="a" style="left:244.3px;top:145.65px" width="5" height="3"><path d="M0 0 H5 L2.5 3Z" fill="#000"/></svg>
<div class="t" style="left:198.8px;top:142.9px;font-size:8.3px;color:#000;letter-spacing:-0.27px;">Doplňková</div>
<div class="t" style="left:256.1px;top:143.1px;font-size:8.3px;color:#600000;letter-spacing:-0.27px;">Schůzka</div>
<div class="t" style="left:327.6px;top:143.1px;font-size:8.3px;color:#600000;letter-spacing:-0.27px;">sdddd</div>
<div class="t" style="left:399px;top:143.1px;font-size:8.3px;color:#600000;letter-spacing:-0.27px;">ddd</div>
<div class="t" style="left:470.4px;top:143.1px;font-size:8.3px;color:#600000;letter-spacing:-0.27px;">sdddd</div>
<div class="t" style="right:445.27px;top:143.1px;font-size:8.3px;color:#600000;letter-spacing:-0.27px;">115</div>
<div class="a" style="left:591.6px;top:141.95px;width:9.4px;height:9.4px;border:1px solid #8e8f8f;background:linear-gradient(135deg,#d2d4e0,#eceef4 55%,#fcfcfe);box-shadow:inset 0 0 0 1px #f4f4f4"><svg class="a" style="left:0.2px;top:0.2px" width="7" height="7" viewBox="0 0 8 8"><path d="M1.2 3.6 L3.2 6.4 L6.8 0.8" fill="none" stroke="#0e1a66" stroke-width="1.9"/></svg></div>
<div class="a" style="left:620.15px;top:141.95px;width:9.4px;height:9.4px;border:1px solid #8e8f8f;background:linear-gradient(135deg,#d2d4e0,#eceef4 55%,#fcfcfe);box-shadow:inset 0 0 0 1px #f4f4f4"></div>
<div class="a" style="left:648.85px;top:141.95px;width:9.4px;height:9.4px;border:1px solid #8e8f8f;background:linear-gradient(135deg,#d2d4e0,#eceef4 55%,#fcfcfe);box-shadow:inset 0 0 0 1px #f4f4f4"></div>
<div class="a" style="left:677.3px;top:141.95px;width:9.4px;height:9.4px;border:1px solid #8e8f8f;background:linear-gradient(135deg,#d2d4e0,#eceef4 55%,#fcfcfe);box-shadow:inset 0 0 0 1px #f4f4f4"><svg class="a" style="left:0.2px;top:0.2px" width="7" height="7" viewBox="0 0 8 8"><path d="M1.2 3.6 L3.2 6.4 L6.8 0.8" fill="none" stroke="#0e1a66" stroke-width="1.9"/></svg></div>
<div class="a" style="left:705.8px;top:141.95px;width:9.4px;height:9.4px;border:1px solid #8e8f8f;background:linear-gradient(135deg,#d2d4e0,#eceef4 55%,#fcfcfe);box-shadow:inset 0 0 0 1px #f4f4f4"><svg class="a" style="left:0.2px;top:0.2px" width="7" height="7" viewBox="0 0 8 8"><path d="M1.2 3.6 L3.2 6.4 L6.8 0.8" fill="none" stroke="#0e1a66" stroke-width="1.9"/></svg></div>
<div class="a" style="left:734.55px;top:141.95px;width:9.4px;height:9.4px;border:1px solid #8e8f8f;background:linear-gradient(135deg,#d2d4e0,#eceef4 55%,#fcfcfe);box-shadow:inset 0 0 0 1px #f4f4f4"></div>
<div class="a" style="left:763.3px;top:141.95px;width:9.4px;height:9.4px;border:1px solid #8e8f8f;background:linear-gradient(135deg,#d2d4e0,#eceef4 55%,#fcfcfe);box-shadow:inset 0 0 0 1px #f4f4f4"></div>
<div class="t" style="left:785.5px;top:143.1px;font-size:8.3px;color:#600000;letter-spacing:-0.27px;">3.2.;4.2.;</div>
<div class="t" style="left:856.9px;top:143.1px;font-size:8.3px;color:#600000;letter-spacing:-0.27px;">2.2.</div>
<div class="t" style="right:59.77px;top:143.1px;font-size:8.3px;color:#600000;letter-spacing:-0.27px;">20</div>
<div class="t" style="right:16.07px;top:143.1px;font-size:8.3px;color:#600000;letter-spacing:-0.27px;">1</div>
<div class="a" style="left:104px;top:154.4px;width:28.3px;height:15.6px;background:linear-gradient(#fff,#f4f4f4);border-bottom:1px solid #dcdcdc;border-right:1px solid #dcdcdc;"></div>
<div class="a" style="left:132.3px;top:154.4px;width:879.5px;height:15.6px;background:#ffff00;"></div>
<div class="a" style="left:925.7px;top:154.4px;width:86.1px;height:15.6px;background:#ffa0b0;"></div>
<div class="a" style="left:159.6px;top:154.4px;width:1px;height:15.6px;background:rgba(90,90,0,0.45);"></div>
<div class="a" style="left:195.6px;top:154.4px;width:1px;height:15.6px;background:rgba(90,90,0,0.45);"></div>
<div class="a" style="left:252.5px;top:154.4px;width:1px;height:15.6px;background:rgba(90,90,0,0.45);"></div>
<div class="a" style="left:324px;top:154.4px;width:1px;height:15.6px;background:rgba(90,90,0,0.45);"></div>
<div class="a" style="left:395.4px;top:154.4px;width:1px;height:15.6px;background:rgba(90,90,0,0.45);"></div>
<div class="a" style="left:466.8px;top:154.4px;width:1px;height:15.6px;background:rgba(90,90,0,0.45);"></div>
<div class="a" style="left:538.4px;top:154.4px;width:1px;height:15.6px;background:rgba(90,90,0,0.45);"></div>
<div class="a" style="left:581.6px;top:154.4px;width:1px;height:15.6px;background:rgba(90,90,0,0.45);"></div>
<div class="a" style="left:610px;top:154.4px;width:1px;height:15.6px;background:rgba(90,90,0,0.45);"></div>
<div class="a" style="left:638.7px;top:154.4px;width:1px;height:15.6px;background:rgba(90,90,0,0.45);"></div>
<div class="a" style="left:667.4px;top:154.4px;width:1px;height:15.6px;background:rgba(90,90,0,0.45);"></div>
<div class="a" style="left:695.6px;top:154.4px;width:1px;height:15.6px;background:rgba(90,90,0,0.45);"></div>
<div class="a" style="left:724.4px;top:154.4px;width:1px;height:15.6px;background:rgba(90,90,0,0.45);"></div>
<div class="a" style="left:753.1px;top:154.4px;width:1px;height:15.6px;background:rgba(90,90,0,0.45);"></div>
<div class="a" style="left:781.9px;top:154.4px;width:1px;height:15.6px;background:rgba(90,90,0,0.45);"></div>
<div class="a" style="left:853.3px;top:154.4px;width:1px;height:15.6px;background:rgba(90,90,0,0.45);"></div>
<div class="a" style="left:924.7px;top:154.4px;width:1px;height:15.6px;background:rgba(90,90,0,0.45);"></div>
<div class="a" style="left:967.1px;top:154.4px;width:1px;height:15.6px;background:rgba(90,90,0,0.45);"></div>
<div class="a" style="left:1010.8px;top:154.4px;width:1px;height:15.6px;background:rgba(90,90,0,0.45);"></div>
<div class="a" style="left:132.3px;top:169px;width:879.5px;height:1px;background:rgba(90,90,0,0.35);"></div>
<div class="a" style="left:141.25px;top:157.5px;width:9.4px;height:9.4px;border:1px solid #8e8f8f;background:linear-gradient(135deg,#d2d4e0,#eceef4 55%,#fcfcfe);box-shadow:inset 0 0 0 1px #f4f4f4"><svg class="a" style="left:0.2px;top:0.2px" width="7" height="7" viewBox="0 0 8 8"><path d="M1.2 3.6 L3.2 6.4 L6.8 0.8" fill="none" stroke="#0e1a66" stroke-width="1.9"/></svg></div>
<div class="a" style="left:196.6px;top:154.1px;width:56.6px;height:15.9px;background:linear-gradient(#efefef,#e6e6e6 50%,#dcdcdc);border:1px solid #5c5c5c;box-shadow:inset 0 0 0 1px #f2f2f2;"></div>
<div class="a" style="left:240.9px;top:154.4px;width:1px;height:15.6px;background:#5c5c5c;"></div>
<svg class="a" style="left:244.3px;top:161.2px" width="5" height="3"><path d="M0 0 H5 L2.5 3Z" fill="#000"/></svg>
<div class="t" style="left:198.8px;top:158.45px;font-size:8.3px;color:#000;letter-spacing:-0.27px;">Pravidelná</div>
<div class="t" style="left:256.1px;top:158.65px;font-size:8.3px;color:#000;letter-spacing:-0.27px;">Jednání</div>
<div class="t" style="left:327.6px;top:158.65px;font-size:8.3px;color:#000;letter-spacing:-0.27px;">Mělník</div>
<div class="t" style="left:399px;top:158.65px;font-size:8.3px;color:#000;letter-spacing:-0.27px;">Praha</div>
<div class="t" style="left:470.4px;top:158.65px;font-size:8.3px;color:#000;letter-spacing:-0.27px;">Mělník</div>
<div class="t" style="right:445.27px;top:158.65px;font-size:8.3px;color:#000;letter-spacing:-0.27px;">215</div>
<div class="a" style="left:591.6px;top:157.5px;width:9.4px;height:9.4px;border:1px solid #8e8f8f;background:linear-gradient(135deg,#d2d4e0,#eceef4 55%,#fcfcfe);box-shadow:inset 0 0 0 1px #f4f4f4"><svg class="a" style="left:0.2px;top:0.2px" width="7" height="7" viewBox="0 0 8 8"><path d="M1.2 3.6 L3.2 6.4 L6.8 0.8" fill="none" stroke="#0e1a66" stroke-width="1.9"/></svg></div>
<div class="a" style="left:620.15px;top:157.5px;width:9.4px;height:9.4px;border:1px solid #8e8f8f;background:linear-gradient(135deg,#d2d4e0,#eceef4 55%,#fcfcfe);box-shadow:inset 0 0 0 1px #f4f4f4"><svg class="a" style="left:0.2px;top:0.2px" width="7" height="7" viewBox="0 0 8 8"><path d="M1.2 3.6 L3.2 6.4 L6.8 0.8" fill="none" stroke="#0e1a66" stroke-width="1.9"/></svg></div>
<div class="a" style="left:648.85px;top:157.5px;width:9.4px;height:9.4px;border:1px solid #8e8f8f;background:linear-gradient(135deg,#d2d4e0,#eceef4 55%,#fcfcfe);box-shadow:inset 0 0 0 1px #f4f4f4"></div>
<div class="a" style="left:677.3px;top:157.5px;width:9.4px;height:9.4px;border:1px solid #8e8f8f;background:linear-gradient(135deg,#d2d4e0,#eceef4 55%,#fcfcfe);box-shadow:inset 0 0 0 1px #f4f4f4"><svg class="a" style="left:0.2px;top:0.2px" width="7" height="7" viewBox="0 0 8 8"><path d="M1.2 3.6 L3.2 6.4 L6.8 0.8" fill="none" stroke="#0e1a66" stroke-width="1.9"/></svg></div>
<div class="a" style="left:705.8px;top:157.5px;width:9.4px;height:9.4px;border:1px solid #8e8f8f;background:linear-gradient(135deg,#d2d4e0,#eceef4 55%,#fcfcfe);box-shadow:inset 0 0 0 1px #f4f4f4"></div>
<div class="a" style="left:734.55px;top:157.5px;width:9.4px;height:9.4px;border:1px solid #8e8f8f;background:linear-gradient(135deg,#d2d4e0,#eceef4 55%,#fcfcfe);box-shadow:inset 0 0 0 1px #f4f4f4"></div>
<div class="a" style="left:763.3px;top:157.5px;width:9.4px;height:9.4px;border:1px solid #8e8f8f;background:linear-gradient(135deg,#d2d4e0,#eceef4 55%,#fcfcfe);box-shadow:inset 0 0 0 1px #f4f4f4"></div>
<div class="t" style="left:856.9px;top:158.65px;font-size:8.3px;color:#000;letter-spacing:-0.27px;">2.2.;1.1-9.1</div>
<div class="a" style="left:104px;top:170px;width:28.3px;height:15.8px;background:linear-gradient(#fff,#f4f4f4);border-bottom:1px solid #dcdcdc;border-right:1px solid #dcdcdc;"></div>
<div class="a" style="left:132.3px;top:170px;width:879.5px;height:15.8px;background:#ff8c00;"></div>
<div class="a" style="left:159.6px;top:170px;width:1px;height:15.8px;background:rgba(90,90,0,0.45);"></div>
<div class="a" style="left:195.6px;top:170px;width:1px;height:15.8px;background:rgba(90,90,0,0.45);"></div>
<div class="a" style="left:252.5px;top:170px;width:1px;height:15.8px;background:rgba(90,90,0,0.45);"></div>
<div class="a" style="left:324px;top:170px;width:1px;height:15.8px;background:rgba(90,90,0,0.45);"></div>
<div class="a" style="left:395.4px;top:170px;width:1px;height:15.8px;background:rgba(90,90,0,0.45);"></div>
<div class="a" style="left:466.8px;top:170px;width:1px;height:15.8px;background:rgba(90,90,0,0.45);"></div>
<div class="a" style="left:538.4px;top:170px;width:1px;height:15.8px;background:rgba(90,90,0,0.45);"></div>
<div class="a" style="left:581.6px;top:170px;width:1px;height:15.8px;background:rgba(90,90,0,0.45);"></div>
<div class="a" style="left:610px;top:170px;width:1px;height:15.8px;background:rgba(90,90,0,0.45);"></div>
<div class="a" style="left:638.7px;top:170px;width:1px;height:15.8px;background:rgba(90,90,0,0.45);"></div>
<div class="a" style="left:667.4px;top:170px;width:1px;height:15.8px;background:rgba(90,90,0,0.45);"></div>
<div class="a" style="left:695.6px;top:170px;width:1px;height:15.8px;background:rgba(90,90,0,0.45);"></div>
<div class="a" style="left:724.4px;top:170px;width:1px;height:15.8px;background:rgba(90,90,0,0.45);"></div>
<div class="a" style="left:753.1px;top:170px;width:1px;height:15.8px;background:rgba(90,90,0,0.45);"></div>
<div class="a" style="left:781.9px;top:170px;width:1px;height:15.8px;background:rgba(90,90,0,0.45);"></div>
<div class="a" style="left:853.3px;top:170px;width:1px;height:15.8px;background:rgba(90,90,0,0.45);"></div>
<div class="a" style="left:924.7px;top:170px;width:1px;height:15.8px;background:rgba(90,90,0,0.45);"></div>
<div class="a" style="left:967.1px;top:170px;width:1px;height:15.8px;background:rgba(90,90,0,0.45);"></div>
<div class="a" style="left:1010.8px;top:170px;width:1px;height:15.8px;background:rgba(90,90,0,0.45);"></div>
<div class="a" style="left:132.3px;top:184.8px;width:879.5px;height:1px;background:rgba(90,90,0,0.35);"></div>
<div class="a" style="left:141.25px;top:173.2px;width:9.4px;height:9.4px;border:1px solid #8e8f8f;background:linear-gradient(135deg,#d2d4e0,#eceef4 55%,#fcfcfe);box-shadow:inset 0 0 0 1px #f4f4f4"><svg class="a" style="left:0.2px;top:0.2px" width="7" height="7" viewBox="0 0 8 8"><path d="M1.2 3.6 L3.2 6.4 L6.8 0.8" fill="none" stroke="#0e1a66" stroke-width="1.9"/></svg></div>
<div class="a" style="left:196.6px;top:169.7px;width:56.6px;height:16.1px;background:linear-gradient(#efefef,#e6e6e6 50%,#dcdcdc);border:1px solid #5c5c5c;box-shadow:inset 0 0 0 1px #f2f2f2;"></div>
<div class="a" style="left:240.9px;top:170px;width:1px;height:15.8px;background:#5c5c5c;"></div>
<svg class="a" style="left:244.3px;top:176.9px" width="5" height="3"><path d="M0 0 H5 L2.5 3Z" fill="#000"/></svg>
<div class="t" style="left:198.8px;top:174.15px;font-size:8.3px;color:#000;letter-spacing:-0.27px;">Pravidelná</div>
<div class="t" style="left:327.6px;top:174.35px;font-size:8.3px;color:#600000;letter-spacing:-0.27px;">Praha</div>
<div class="t" style="left:470.4px;top:174.35px;font-size:8.3px;color:#600000;letter-spacing:-0.27px;">Praha</div>
<div class="t" style="right:445.27px;top:174.35px;font-size:8.3px;color:#600000;letter-spacing:-0.27px;">89</div>
<div class="a" style="left:591.6px;top:173.2px;width:9.4px;height:9.4px;border:1px solid #8e8f8f;background:linear-gradient(135deg,#d2d4e0,#eceef4 55%,#fcfcfe);box-shadow:inset 0 0 0 1px #f4f4f4"></div>
<div class="a" style="left:620.15px;top:173.2px;width:9.4px;height:9.4px;border:1px solid #8e8f8f;background:linear-gradient(135deg,#d2d4e0,#eceef4 55%,#fcfcfe);box-shadow:inset 0 0 0 1px #f4f4f4"></div>
<div class="a" style="left:648.85px;top:173.2px;width:9.4px;height:9.4px;border:1px solid #8e8f8f;background:linear-gradient(135deg,#d2d4e0,#eceef4 55%,#fcfcfe);box-shadow:inset 0 0 0 1px #f4f4f4"><svg class="a" style="left:0.2px;top:0.2px" width="7" height="7" viewBox="0 0 8 8"><path d="M1.2 3.6 L3.2 6.4 L6.8 0.8" fill="none" stroke="#0e1a66" stroke-width="1.9"/></svg></div>
<div class="a" style="left:677.3px;top:173.2px;width:9.4px;height:9.4px;border:1px solid #8e8f8f;background:linear-gradient(135deg,#d2d4e0,#eceef4 55%,#fcfcfe);box-shadow:inset 0 0 0 1px #f4f4f4"></div>
<div class="a" style="left:705.8px;top:173.2px;width:9.4px;height:9.4px;border:1px solid #8e8f8f;background:linear-gradient(135deg,#d2d4e0,#eceef4 55%,#fcfcfe);box-shadow:inset 0 0 0 1px #f4f4f4"></div>
<div class="a" style="left:734.55px;top:173.2px;width:9.4px;height:9.4px;border:1px solid #8e8f8f;background:linear-gradient(135deg,#d2d4e0,#eceef4 55%,#fcfcfe);box-shadow:inset 0 0 0 1px #f4f4f4"></div>
<div class="a" style="left:763.3px;top:173.2px;width:9.4px;height:9.4px;border:1px solid #8e8f8f;background:linear-gradient(135deg,#d2d4e0,#eceef4 55%,#fcfcfe);box-shadow:inset 0 0 0 1px #f4f4f4"></div>
<div class="a" style="left:104px;top:185.8px;width:28.3px;height:15.8px;background:linear-gradient(#fff,#f4f4f4);border-bottom:1px solid #dcdcdc;border-right:1px solid #dcdcdc;"></div>
<div class="a" style="left:132.3px;top:185.8px;width:879.5px;height:15.8px;background:#ffff00;"></div>
<div class="a" style="left:925.7px;top:185.8px;width:86.1px;height:15.8px;background:#ffa0b0;"></div>
<div class="a" style="left:159.6px;top:185.8px;width:1px;height:15.8px;background:rgba(90,90,0,0.45);"></div>
<div class="a" style="left:195.6px;top:185.8px;width:1px;height:15.8px;background:rgba(90,90,0,0.45);"></div>
<div class="a" style="left:252.5px;top:185.8px;width:1px;height:15.8px;background:rgba(90,90,0,0.45);"></div>
<div class="a" style="left:324px;top:185.8px;width:1px;height:15.8px;background:rgba(90,90,0,0.45);"></div>
<div class="a" style="left:395.4px;top:185.8px;width:1px;height:15.8px;background:rgba(90,90,0,0.45);"></div>
<div class="a" style="left:466.8px;top:185.8px;width:1px;height:15.8px;background:rgba(90,90,0,0.45);"></div>
<div class="a" style="left:538.4px;top:185.8px;width:1px;height:15.8px;background:rgba(90,90,0,0.45);"></div>
<div class="a" style="left:581.6px;top:185.8px;width:1px;height:15.8px;background:rgba(90,90,0,0.45);"></div>
<div class="a" style="left:610px;top:185.8px;width:1px;height:15.8px;background:rgba(90,90,0,0.45);"></div>
<div class="a" style="left:638.7px;top:185.8px;width:1px;height:15.8px;background:rgba(90,90,0,0.45);"></div>
<div class="a" style="left:667.4px;top:185.8px;width:1px;height:15.8px;background:rgba(90,90,0,0.45);"></div>
<div class="a" style="left:695.6px;top:185.8px;width:1px;height:15.8px;background:rgba(90,90,0,0.45);"></div>
<div class="a" style="left:724.4px;top:185.8px;width:1px;height:15.8px;background:rgba(90,90,0,0.45);"></div>
<div class="a" style="left:753.1px;top:185.8px;width:1px;height:15.8px;background:rgba(90,90,0,0.45);"></div>
<div class="a" style="left:781.9px;top:185.8px;width:1px;height:15.8px;background:rgba(90,90,0,0.45);"></div>
<div class="a" style="left:853.3px;top:185.8px;width:1px;height:15.8px;background:rgba(90,90,0,0.45);"></div>
<div class="a" style="left:924.7px;top:185.8px;width:1px;height:15.8px;background:rgba(90,90,0,0.45);"></div>
<div class="a" style="left:967.1px;top:185.8px;width:1px;height:15.8px;background:rgba(90,90,0,0.45);"></div>
<div class="a" style="left:1010.8px;top:185.8px;width:1px;height:15.8px;background:rgba(90,90,0,0.45);"></div>
<div class="a" style="left:132.3px;top:200.6px;width:879.5px;height:1px;background:rgba(90,90,0,0.35);"></div>
<div class="a" style="left:141.25px;top:189px;width:9.4px;height:9.4px;border:1px solid #8e8f8f;background:linear-gradient(135deg,#d2d4e0,#eceef4 55%,#fcfcfe);box-shadow:inset 0 0 0 1px #f4f4f4"><svg class="a" style="left:0.2px;top:0.2px" width="7" height="7" viewBox="0 0 8 8"><path d="M1.2 3.6 L3.2 6.4 L6.8 0.8" fill="none" stroke="#0e1a66" stroke-width="1.9"/></svg></div>
<div class="a" style="left:196.6px;top:185.5px;width:56.6px;height:16.1px;background:linear-gradient(#efefef,#e6e6e6 50%,#dcdcdc);border:1px solid #5c5c5c;box-shadow:inset 0 0 0 1px #f2f2f2;"></div>
<div class="a" style="left:240.9px;top:185.8px;width:1px;height:15.8px;background:#5c5c5c;"></div>
<svg class="a" style="left:244.3px;top:192.7px" width="5" height="3"><path d="M0 0 H5 L2.5 3Z" fill="#000"/></svg>
<div class="t" style="left:198.8px;top:189.95px;font-size:8.3px;color:#000;letter-spacing:-0.27px;">Doplňková</div>
<div class="t" style="left:327.6px;top:190.15px;font-size:8.3px;color:#000;letter-spacing:-0.27px;">Praha</div>
<div class="t" style="left:399px;top:190.15px;font-size:8.3px;color:#000;letter-spacing:-0.27px;">ČB</div>
<div class="t" style="left:470.4px;top:190.15px;font-size:8.3px;color:#000;letter-spacing:-0.27px;">Praha</div>
<div class="t" style="right:445.27px;top:190.15px;font-size:8.3px;color:#000;letter-spacing:-0.27px;">222</div>
<div class="a" style="left:591.6px;top:189px;width:9.4px;height:9.4px;border:1px solid #8e8f8f;background:linear-gradient(135deg,#d2d4e0,#eceef4 55%,#fcfcfe);box-shadow:inset 0 0 0 1px #f4f4f4"></div>
<div class="a" style="left:620.15px;top:189px;width:9.4px;height:9.4px;border:1px solid #8e8f8f;background:linear-gradient(135deg,#d2d4e0,#eceef4 55%,#fcfcfe);box-shadow:inset 0 0 0 1px #f4f4f4"><svg class="a" style="left:0.2px;top:0.2px" width="7" height="7" viewBox="0 0 8 8"><path d="M1.2 3.6 L3.2 6.4 L6.8 0.8" fill="none" stroke="#0e1a66" stroke-width="1.9"/></svg></div>
<div class="a" style="left:648.85px;top:189px;width:9.4px;height:9.4px;border:1px solid #8e8f8f;background:linear-gradient(135deg,#d2d4e0,#eceef4 55%,#fcfcfe);box-shadow:inset 0 0 0 1px #f4f4f4"><svg class="a" style="left:0.2px;top:0.2px" width="7" height="7" viewBox="0 0 8 8"><path d="M1.2 3.6 L3.2 6.4 L6.8 0.8" fill="none" stroke="#0e1a66" stroke-width="1.9"/></svg></div>
<div class="a" style="left:677.3px;top:189px;width:9.4px;height:9.4px;border:1px solid #8e8f8f;background:linear-gradient(135deg,#d2d4e0,#eceef4 55%,#fcfcfe);box-shadow:inset 0 0 0 1px #f4f4f4"></div>
<div class="a" style="left:705.8px;top:189px;width:9.4px;height:9.4px;border:1px solid #8e8f8f;background:linear-gradient(135deg,#d2d4e0,#eceef4 55%,#fcfcfe);box-shadow:inset 0 0 0 1px #f4f4f4"><svg class="a" style="left:0.2px;top:0.2px" width="7" height="7" viewBox="0 0 8 8"><path d="M1.2 3.6 L3.2 6.4 L6.8 0.8" fill="none" stroke="#0e1a66" stroke-width="1.9"/></svg></div>
<div class="a" style="left:734.55px;top:189px;width:9.4px;height:9.4px;border:1px solid #8e8f8f;background:linear-gradient(135deg,#d2d4e0,#eceef4 55%,#fcfcfe);box-shadow:inset 0 0 0 1px #f4f4f4"><svg class="a" style="left:0.2px;top:0.2px" width="7" height="7" viewBox="0 0 8 8"><path d="M1.2 3.6 L3.2 6.4 L6.8 0.8" fill="none" stroke="#0e1a66" stroke-width="1.9"/></svg></div>
<div class="a" style="left:763.3px;top:189px;width:9.4px;height:9.4px;border:1px solid #8e8f8f;background:linear-gradient(135deg,#d2d4e0,#eceef4 55%,#fcfcfe);box-shadow:inset 0 0 0 1px #f4f4f4"></div>
<div class="t" style="right:59.77px;top:190.15px;font-size:8.3px;color:#000;letter-spacing:-0.27px;">30</div>
<div class="t" style="right:16.07px;top:190.15px;font-size:8.3px;color:#000;letter-spacing:-0.27px;">2</div>
<div class="a" style="left:6px;top:363px;width:1012px;height:123.5px;background:linear-gradient(#dcdcdc 0,#f4f4f4 3px,#fdfdfd 4px);"></div>
<div class="a" style="left:1009px;top:364px;width:9px;height:120px;background:linear-gradient(90deg,#fdfdfd,#e8e6f2);"></div>
<div class="a" style="left:1px;top:483.2px;width:1022px;height:4px;background:#e9e6ee;"></div>
<div class="a" style="left:1px;top:487px;width:1022px;height:4.2px;background:linear-gradient(#94c8ee,#64a4dc);"></div>
<div class="a" style="left:33.5px;top:366.8px;width:947.5px;height:114px;background:#fff;border:1px solid #a0a0a0;"></div>
<svg class="a" style="left:40.2px;top:377px" width="3.2" height="4.6" viewBox="0 0 3.2 4.6"><path d="M3.2 0 L0 2.3 L3.2 4.6Z" fill="#000"/></svg>
<svg class="a" style="left:971.5px;top:377px" width="3.2" height="4.6" viewBox="0 0 3.2 4.6"><path d="M0 0 L3.2 2.3 L0 4.6Z" fill="#000"/></svg>
<div class="t" style="left:44.1px;top:375.95px;width:100px;text-align:center;font-size:8.7px;color:#050505;letter-spacing:-0.4px;">leden 2009</div>
<div class="t" style="left:49.357px;top:391.85px;width:16px;text-align:center;font-size:8.7px;color:#050505;letter-spacing:-0.086px;">po</div>
<div class="t" style="left:63.8375px;top:391.85px;width:16px;text-align:center;font-size:8.7px;color:#050505;letter-spacing:0.375px;">út</div>
<div class="t" style="left:77.9585px;top:391.85px;width:16px;text-align:center;font-size:8.7px;color:#050505;letter-spacing:0.117px;">st</div>
<div class="t" style="left:92.2085px;top:391.85px;width:16px;text-align:center;font-size:8.7px;color:#050505;letter-spacing:0.117px;">čt</div>
<div class="t" style="left:106.232px;top:391.85px;width:16px;text-align:center;font-size:8.7px;color:#050505;letter-spacing:-0.336px;">pá</div>
<div class="t" style="left:120.503px;top:391.85px;width:16px;text-align:center;font-size:8.7px;color:#050505;letter-spacing:-0.294px;">so</div>
<div class="t" style="left:134.682px;top:391.85px;width:16px;text-align:center;font-size:8.7px;color:#050505;letter-spacing:-0.436px;">ne</div>
<div class="a" style="left:49.3px;top:404.2px;width:1px;height:48.5px;background:#444;"></div>
<div class="t" style="left:32.778px;top:403.15px;width:20px;text-align:center;font-size:8.7px;color:#050505;letter-spacing:-0.444px;">1</div>
<div class="t" style="right:963.136px;top:403.15px;font-size:8.7px;color:#686868;letter-spacing:-0.536px;">29</div>
<div class="t" style="right:948.886px;top:403.15px;font-size:8.7px;color:#686868;letter-spacing:-0.536px;">30</div>
<div class="t" style="right:934.636px;top:403.15px;font-size:8.7px;color:#686868;letter-spacing:-0.536px;">31</div>
<div class="t" style="right:920.294px;top:403.15px;font-size:8.7px;color:#050505;letter-spacing:-0.444px;">1</div>
<div class="t" style="right:906.044px;top:403.15px;font-size:8.7px;color:#050505;letter-spacing:-0.444px;">2</div>
<div class="t" style="right:891.794px;top:403.15px;font-size:8.7px;color:#050505;letter-spacing:-0.444px;">3</div>
<div class="t" style="right:877.544px;top:403.15px;font-size:8.7px;color:#050505;letter-spacing:-0.444px;">4</div>
<div class="t" style="left:32.778px;top:413.85px;width:20px;text-align:center;font-size:8.7px;color:#050505;letter-spacing:-0.444px;">2</div>
<div class="t" style="right:963.044px;top:413.85px;font-size:8.7px;color:#050505;letter-spacing:-0.444px;">5</div>
<div class="t" style="right:948.794px;top:413.85px;font-size:8.7px;color:#050505;letter-spacing:-0.444px;">6</div>
<div class="t" style="right:934.544px;top:413.85px;font-size:8.7px;color:#050505;letter-spacing:-0.444px;">7</div>
<div class="t" style="right:920.294px;top:413.85px;font-size:8.7px;color:#050505;letter-spacing:-0.444px;">8</div>
<div class="t" style="right:906.044px;top:413.85px;font-size:8.7px;color:#050505;letter-spacing:-0.444px;">9</div>
<div class="t" style="right:891.886px;top:413.85px;font-size:8.7px;color:#050505;letter-spacing:-0.536px;">10</div>
<div class="t" style="right:877.316px;top:413.85px;font-size:8.7px;color:#050505;letter-spacing:-0.216px;">11</div>
<div class="t" style="left:32.778px;top:424.55px;width:20px;text-align:center;font-size:8.7px;color:#050505;letter-spacing:-0.444px;">3</div>
<div class="a" style="left:50.7px;top:423.6px;width:14.2px;height:10.6px;background:#d6ebfa;border:1px solid #2a7ab8;border-radius:1.5px;"></div>
<div class="t" style="right:963.136px;top:424.55px;font-size:8.7px;color:#0a4a90;letter-spacing:-0.536px;">12</div>
<div class="t" style="right:948.886px;top:424.55px;font-size:8.7px;color:#050505;letter-spacing:-0.536px;">13</div>
<div class="t" style="right:934.636px;top:424.55px;font-size:8.7px;color:#050505;letter-spacing:-0.536px;">14</div>
<div class="t" style="right:920.386px;top:424.55px;font-size:8.7px;color:#050505;letter-spacing:-0.536px;">15</div>
<div class="t" style="right:906.136px;top:424.55px;font-size:8.7px;color:#050505;letter-spacing:-0.536px;">16</div>
<div class="t" style="right:891.886px;top:424.55px;font-size:8.7px;color:#050505;letter-spacing:-0.536px;">17</div>
<div class="t" style="right:877.636px;top:424.55px;font-size:8.7px;color:#050505;letter-spacing:-0.536px;">18</div>
<div class="t" style="left:32.778px;top:435.15px;width:20px;text-align:center;font-size:8.7px;color:#050505;letter-spacing:-0.444px;">4</div>
<div class="t" style="right:963.136px;top:435.15px;font-size:8.7px;color:#050505;letter-spacing:-0.536px;">19</div>
<div class="t" style="right:948.886px;top:435.15px;font-size:8.7px;color:#050505;letter-spacing:-0.536px;">20</div>
<div class="t" style="right:934.636px;top:435.15px;font-size:8.7px;color:#050505;letter-spacing:-0.536px;">21</div>
<div class="t" style="right:920.386px;top:435.15px;font-size:8.7px;color:#050505;letter-spacing:-0.536px;">22</div>
<div class="t" style="right:906.136px;top:435.15px;font-size:8.7px;color:#050505;letter-spacing:-0.536px;">23</div>
<div class="t" style="right:891.886px;top:435.15px;font-size:8.7px;color:#050505;letter-spacing:-0.536px;">24</div>
<div class="t" style="right:877.636px;top:435.15px;font-size:8.7px;color:#050505;letter-spacing:-0.536px;">25</div>
<div class="t" style="left:32.778px;top:445.85px;width:20px;text-align:center;font-size:8.7px;color:#050505;letter-spacing:-0.444px;">5</div>
<div class="t" style="right:963.136px;top:445.85px;font-size:8.7px;color:#050505;letter-spacing:-0.536px;">26</div>
<div class="t" style="right:948.886px;top:445.85px;font-size:8.7px;color:#050505;letter-spacing:-0.536px;">27</div>
<div class="t" style="right:934.636px;top:445.85px;font-size:8.7px;color:#050505;letter-spacing:-0.536px;">28</div>
<div class="t" style="right:920.386px;top:445.85px;font-size:8.7px;color:#050505;letter-spacing:-0.536px;">29</div>
<div class="t" style="right:906.136px;top:445.85px;font-size:8.7px;color:#050505;letter-spacing:-0.536px;">30</div>
<div class="t" style="right:891.886px;top:445.85px;font-size:8.7px;color:#050505;letter-spacing:-0.536px;">31</div>
<div class="t" style="left:162.012px;top:375.95px;width:100px;text-align:center;font-size:8.7px;color:#050505;letter-spacing:-0.516px;">únor 2009</div>
<div class="t" style="left:167.327px;top:391.85px;width:16px;text-align:center;font-size:8.7px;color:#050505;letter-spacing:-0.086px;">po</div>
<div class="t" style="left:181.808px;top:391.85px;width:16px;text-align:center;font-size:8.7px;color:#050505;letter-spacing:0.375px;">út</div>
<div class="t" style="left:195.929px;top:391.85px;width:16px;text-align:center;font-size:8.7px;color:#050505;letter-spacing:0.117px;">st</div>
<div class="t" style="left:210.179px;top:391.85px;width:16px;text-align:center;font-size:8.7px;color:#050505;letter-spacing:0.117px;">čt</div>
<div class="t" style="left:224.202px;top:391.85px;width:16px;text-align:center;font-size:8.7px;color:#050505;letter-spacing:-0.336px;">pá</div>
<div class="t" style="left:238.473px;top:391.85px;width:16px;text-align:center;font-size:8.7px;color:#050505;letter-spacing:-0.294px;">so</div>
<div class="t" style="left:252.652px;top:391.85px;width:16px;text-align:center;font-size:8.7px;color:#050505;letter-spacing:-0.436px;">ne</div>
<div class="a" style="left:167.27px;top:404.2px;width:1px;height:48.5px;background:#444;"></div>
<div class="t" style="left:150.748px;top:403.15px;width:20px;text-align:center;font-size:8.7px;color:#050505;letter-spacing:-0.444px;">5</div>
<div class="t" style="right:759.574px;top:403.15px;font-size:8.7px;color:#050505;letter-spacing:-0.444px;">1</div>
<div class="t" style="left:150.748px;top:413.85px;width:20px;text-align:center;font-size:8.7px;color:#050505;letter-spacing:-0.444px;">6</div>
<div class="t" style="right:845.074px;top:413.85px;font-size:8.7px;color:#050505;letter-spacing:-0.444px;">2</div>
<div class="t" style="right:830.824px;top:413.85px;font-size:8.7px;color:#050505;letter-spacing:-0.444px;">3</div>
<div class="t" style="right:816.574px;top:413.85px;font-size:8.7px;color:#050505;letter-spacing:-0.444px;">4</div>
<div class="t" style="right:802.324px;top:413.85px;font-size:8.7px;color:#050505;letter-spacing:-0.444px;">5</div>
<div class="t" style="right:788.074px;top:413.85px;font-size:8.7px;color:#050505;letter-spacing:-0.444px;">6</div>
<div class="t" style="right:773.824px;top:413.85px;font-size:8.7px;color:#050505;letter-spacing:-0.444px;">7</div>
<div class="t" style="right:759.574px;top:413.85px;font-size:8.7px;color:#050505;letter-spacing:-0.444px;">8</div>
<div class="t" style="left:150.748px;top:424.55px;width:20px;text-align:center;font-size:8.7px;color:#050505;letter-spacing:-0.444px;">7</div>
<div class="t" style="right:845.074px;top:424.55px;font-size:8.7px;color:#050505;letter-spacing:-0.444px;">9</div>
<div class="t" style="right:830.916px;top:424.55px;font-size:8.7px;color:#050505;letter-spacing:-0.536px;">10</div>
<div class="t" style="right:816.346px;top:424.55px;font-size:8.7px;color:#050505;letter-spacing:-0.216px;">11</div>
<div class="t" style="right:802.416px;top:424.55px;font-size:8.7px;color:#050505;letter-spacing:-0.536px;">12</div>
<div class="t" style="right:788.166px;top:424.55px;font-size:8.7px;color:#050505;letter-spacing:-0.536px;">13</div>
<div class="t" style="right:773.916px;top:424.55px;font-size:8.7px;color:#050505;letter-spacing:-0.536px;">14</div>
<div class="t" style="right:759.666px;top:424.55px;font-size:8.7px;color:#050505;letter-spacing:-0.536px;">15</div>
<div class="t" style="left:150.748px;top:435.15px;width:20px;text-align:center;font-size:8.7px;color:#050505;letter-spacing:-0.444px;">8</div>
<div class="t" style="right:845.166px;top:435.15px;font-size:8.7px;color:#050505;letter-spacing:-0.536px;">16</div>
<div class="t" style="right:830.916px;top:435.15px;font-size:8.7px;color:#050505;letter-spacing:-0.536px;">17</div>
<div class="t" style="right:816.666px;top:435.15px;font-size:8.7px;color:#050505;letter-spacing:-0.536px;">18</div>
<div class="t" style="right:802.416px;top:435.15px;font-size:8.7px;color:#050505;letter-spacing:-0.536px;">19</div>
<div class="t" style="right:788.166px;top:435.15px;font-size:8.7px;color:#050505;letter-spacing:-0.536px;">20</div>
<div class="t" style="right:773.916px;top:435.15px;font-size:8.7px;color:#050505;letter-spacing:-0.536px;">21</div>
<div class="t" style="right:759.666px;top:435.15px;font-size:8.7px;color:#050505;letter-spacing:-0.536px;">22</div>
<div class="t" style="left:150.748px;top:445.85px;width:20px;text-align:center;font-size:8.7px;color:#050505;letter-spacing:-0.444px;">9</div>
<div class="t" style="right:845.166px;top:445.85px;font-size:8.7px;color:#050505;letter-spacing:-0.536px;">23</div>
<div class="t" style="right:830.916px;top:445.85px;font-size:8.7px;color:#050505;letter-spacing:-0.536px;">24</div>
<div class="t" style="right:816.666px;top:445.85px;font-size:8.7px;color:#050505;letter-spacing:-0.536px;">25</div>
<div class="t" style="right:802.416px;top:445.85px;font-size:8.7px;color:#050505;letter-spacing:-0.536px;">26</div>
<div class="t" style="right:788.166px;top:445.85px;font-size:8.7px;color:#050505;letter-spacing:-0.536px;">27</div>
<div class="t" style="right:773.916px;top:445.85px;font-size:8.7px;color:#050505;letter-spacing:-0.536px;">28</div>
<div class="t" style="left:279.998px;top:375.95px;width:100px;text-align:center;font-size:8.7px;color:#050505;letter-spacing:-0.483px;">březen 2009</div>
<div class="t" style="left:285.297px;top:391.85px;width:16px;text-align:center;font-size:8.7px;color:#050505;letter-spacing:-0.086px;">po</div>
<div class="t" style="left:299.777px;top:391.85px;width:16px;text-align:center;font-size:8.7px;color:#050505;letter-spacing:0.375px;">út</div>
<div class="t" style="left:313.898px;top:391.85px;width:16px;text-align:center;font-size:8.7px;color:#050505;letter-spacing:0.117px;">st</div>
<div class="t" style="left:328.148px;top:391.85px;width:16px;text-align:center;font-size:8.7px;color:#050505;letter-spacing:0.117px;">čt</div>
<div class="t" style="left:342.172px;top:391.85px;width:16px;text-align:center;font-size:8.7px;color:#050505;letter-spacing:-0.336px;">pá</div>
<div class="t" style="left:356.443px;top:391.85px;width:16px;text-align:center;font-size:8.7px;color:#050505;letter-spacing:-0.294px;">so</div>
<div class="t" style="left:370.622px;top:391.85px;width:16px;text-align:center;font-size:8.7px;color:#050505;letter-spacing:-0.436px;">ne</div>
<div class="a" style="left:285.24px;top:404.2px;width:1px;height:59.2px;background:#444;"></div>
<div class="t" style="left:268.718px;top:403.15px;width:20px;text-align:center;font-size:8.7px;color:#050505;letter-spacing:-0.444px;">9</div>
<div class="t" style="right:641.604px;top:403.15px;font-size:8.7px;color:#050505;letter-spacing:-0.444px;">1</div>
<div class="t" style="left:268.697px;top:413.85px;width:20px;text-align:center;font-size:8.7px;color:#050505;letter-spacing:-0.486px;">10</div>
<div class="t" style="right:727.104px;top:413.85px;font-size:8.7px;color:#050505;letter-spacing:-0.444px;">2</div>
<div class="t" style="right:712.854px;top:413.85px;font-size:8.7px;color:#050505;letter-spacing:-0.444px;">3</div>
<div class="t" style="right:698.604px;top:413.85px;font-size:8.7px;color:#050505;letter-spacing:-0.444px;">4</div>
<div class="t" style="right:684.354px;top:413.85px;font-size:8.7px;color:#050505;letter-spacing:-0.444px;">5</div>
<div class="t" style="right:670.104px;top:413.85px;font-size:8.7px;color:#050505;letter-spacing:-0.444px;">6</div>
<div class="t" style="right:655.854px;top:413.85px;font-size:8.7px;color:#050505;letter-spacing:-0.444px;">7</div>
<div class="t" style="right:641.604px;top:413.85px;font-size:8.7px;color:#050505;letter-spacing:-0.444px;">8</div>
<div class="t" style="left:268.857px;top:424.55px;width:20px;text-align:center;font-size:8.7px;color:#050505;letter-spacing:-0.166px;">11</div>
<div class="t" style="right:727.104px;top:424.55px;font-size:8.7px;color:#050505;letter-spacing:-0.444px;">9</div>
<div class="t" style="right:712.946px;top:424.55px;font-size:8.7px;color:#050505;letter-spacing:-0.536px;">10</div>
<div class="t" style="right:698.376px;top:424.55px;font-size:8.7px;color:#050505;letter-spacing:-0.216px;">11</div>
<div class="t" style="right:684.446px;top:424.55px;font-size:8.7px;color:#050505;letter-spacing:-0.536px;">12</div>
<div class="t" style="right:670.196px;top:424.55px;font-size:8.7px;color:#050505;letter-spacing:-0.536px;">13</div>
<div class="t" style="right:655.946px;top:424.55px;font-size:8.7px;color:#050505;letter-spacing:-0.536px;">14</div>
<div class="t" style="right:641.696px;top:424.55px;font-size:8.7px;color:#050505;letter-spacing:-0.536px;">15</div>
<div class="t" style="left:268.697px;top:435.15px;width:20px;text-align:center;font-size:8.7px;color:#050505;letter-spacing:-0.486px;">12</div>
<div class="t" style="right:727.196px;top:435.15px;font-size:8.7px;color:#050505;letter-spacing:-0.536px;">16</div>
<div class="t" style="right:712.946px;top:435.15px;font-size:8.7px;color:#050505;letter-spacing:-0.536px;">17</div>
<div class="t" style="right:698.696px;top:435.15px;font-size:8.7px;color:#050505;letter-spacing:-0.536px;">18</div>
<div class="t" style="right:684.446px;top:435.15px;font-size:8.7px;color:#050505;letter-spacing:-0.536px;">19</div>
<div class="t" style="right:670.196px;top:435.15px;font-size:8.7px;color:#050505;letter-spacing:-0.536px;">20</div>
<div class="t" style="right:655.946px;top:435.15px;font-size:8.7px;color:#050505;letter-spacing:-0.536px;">21</div>
<div class="t" style="right:641.696px;top:435.15px;font-size:8.7px;color:#050505;letter-spacing:-0.536px;">22</div>
<div class="t" style="left:268.697px;top:445.85px;width:20px;text-align:center;font-size:8.7px;color:#050505;letter-spacing:-0.486px;">13</div>
<div class="t" style="right:727.196px;top:445.85px;font-size:8.7px;color:#050505;letter-spacing:-0.536px;">23</div>
<div class="t" style="right:712.946px;top:445.85px;font-size:8.7px;color:#050505;letter-spacing:-0.536px;">24</div>
<div class="t" style="right:698.696px;top:445.85px;font-size:8.7px;color:#050505;letter-spacing:-0.536px;">25</div>
<div class="t" style="right:684.446px;top:445.85px;font-size:8.7px;color:#050505;letter-spacing:-0.536px;">26</div>
<div class="t" style="right:670.196px;top:445.85px;font-size:8.7px;color:#050505;letter-spacing:-0.536px;">27</div>
<div class="t" style="right:655.946px;top:445.85px;font-size:8.7px;color:#050505;letter-spacing:-0.536px;">28</div>
<div class="t" style="right:641.696px;top:445.85px;font-size:8.7px;color:#050505;letter-spacing:-0.536px;">29</div>
<div class="t" style="left:268.697px;top:456.55px;width:20px;text-align:center;font-size:8.7px;color:#050505;letter-spacing:-0.486px;">14</div>
<div class="t" style="right:727.196px;top:456.55px;font-size:8.7px;color:#050505;letter-spacing:-0.536px;">30</div>
<div class="t" style="right:712.946px;top:456.55px;font-size:8.7px;color:#050505;letter-spacing:-0.536px;">31</div>
<div class="t" style="left:397.964px;top:375.95px;width:100px;text-align:center;font-size:8.7px;color:#050505;letter-spacing:-0.491px;">duben 2009</div>
<div class="t" style="left:403.267px;top:391.85px;width:16px;text-align:center;font-size:8.7px;color:#050505;letter-spacing:-0.086px;">po</div>
<div class="t" style="left:417.747px;top:391.85px;width:16px;text-align:center;font-size:8.7px;color:#050505;letter-spacing:0.375px;">út</div>
<div class="t" style="left:431.868px;top:391.85px;width:16px;text-align:center;font-size:8.7px;color:#050505;letter-spacing:0.117px;">st</div>
<div class="t" style="left:446.118px;top:391.85px;width:16px;text-align:center;font-size:8.7px;color:#050505;letter-spacing:0.117px;">čt</div>
<div class="t" style="left:460.142px;top:391.85px;width:16px;text-align:center;font-size:8.7px;color:#050505;letter-spacing:-0.336px;">pá</div>
<div class="t" style="left:474.413px;top:391.85px;width:16px;text-align:center;font-size:8.7px;color:#050505;letter-spacing:-0.294px;">so</div>
<div class="t" style="left:488.592px;top:391.85px;width:16px;text-align:center;font-size:8.7px;color:#050505;letter-spacing:-0.436px;">ne</div>
<div class="a" style="left:403.21px;top:404.2px;width:1px;height:48.5px;background:#444;"></div>
<div class="t" style="left:386.667px;top:403.15px;width:20px;text-align:center;font-size:8.7px;color:#050505;letter-spacing:-0.486px;">14</div>
<div class="t" style="right:580.634px;top:403.15px;font-size:8.7px;color:#050505;letter-spacing:-0.444px;">1</div>
<div class="t" style="right:566.384px;top:403.15px;font-size:8.7px;color:#050505;letter-spacing:-0.444px;">2</div>
<div class="t" style="right:552.134px;top:403.15px;font-size:8.7px;color:#050505;letter-spacing:-0.444px;">3</div>
<div class="t" style="right:537.884px;top:403.15px;font-size:8.7px;color:#050505;letter-spacing:-0.444px;">4</div>
<div class="t" style="right:523.634px;top:403.15px;font-size:8.7px;color:#050505;letter-spacing:-0.444px;">5</div>
<div class="t" style="left:386.667px;top:413.85px;width:20px;text-align:center;font-size:8.7px;color:#050505;letter-spacing:-0.486px;">15</div>
<div class="t" style="right:609.134px;top:413.85px;font-size:8.7px;color:#050505;letter-spacing:-0.444px;">6</div>
<div class="t" style="right:594.884px;top:413.85px;font-size:8.7px;color:#050505;letter-spacing:-0.444px;">7</div>
<div class="t" style="right:580.634px;top:413.85px;font-size:8.7px;color:#050505;letter-spacing:-0.444px;">8</div>
<div class="t" style="right:566.384px;top:413.85px;font-size:8.7px;color:#050505;letter-spacing:-0.444px;">9</div>
<div class="t" style="right:552.226px;top:413.85px;font-size:8.7px;color:#050505;letter-spacing:-0.536px;">10</div>
<div class="t" style="right:537.656px;top:413.85px;font-size:8.7px;color:#050505;letter-spacing:-0.216px;">11</div>
<div class="t" style="right:523.726px;top:413.85px;font-size:8.7px;color:#050505;letter-spacing:-0.536px;">12</div>
<div class="t" style="left:386.667px;top:424.55px;width:20px;text-align:center;font-size:8.7px;color:#050505;letter-spacing:-0.486px;">16</div>
<div class="t" style="right:609.226px;top:424.55px;font-size:8.7px;color:#050505;letter-spacing:-0.536px;">13</div>
<div class="t" style="right:594.976px;top:424.55px;font-size:8.7px;color:#050505;letter-spacing:-0.536px;">14</div>
<div class="t" style="right:580.726px;top:424.55px;font-size:8.7px;color:#050505;letter-spacing:-0.536px;">15</div>
<div class="t" style="right:566.476px;top:424.55px;font-size:8.7px;color:#050505;letter-spacing:-0.536px;">16</div>
<div class="t" style="right:552.226px;top:424.55px;font-size:8.7px;color:#050505;letter-spacing:-0.536px;">17</div>
<div class="t" style="right:537.976px;top:424.55px;font-size:8.7px;color:#050505;letter-spacing:-0.536px;">18</div>
<div class="t" style="right:523.726px;top:424.55px;font-size:8.7px;color:#050505;letter-spacing:-0.536px;">19</div>
<div class="t" style="left:386.667px;top:435.15px;width:20px;text-align:center;font-size:8.7px;color:#050505;letter-spacing:-0.486px;">17</div>
<div class="t" style="right:609.226px;top:435.15px;font-size:8.7px;color:#050505;letter-spacing:-0.536px;">20</div>
<div class="t" style="right:594.976px;top:435.15px;font-size:8.7px;color:#050505;letter-spacing:-0.536px;">21</div>
<div class="t" style="right:580.726px;top:435.15px;font-size:8.7px;color:#050505;letter-spacing:-0.536px;">22</div>
<div class="t" style="right:566.476px;top:435.15px;font-size:8.7px;color:#050505;letter-spacing:-0.536px;">23</div>
<div class="t" style="right:552.226px;top:435.15px;font-size:8.7px;color:#050505;letter-spacing:-0.536px;">24</div>
<div class="t" style="right:537.976px;top:435.15px;font-size:8.7px;color:#050505;letter-spacing:-0.536px;">25</div>
<div class="t" style="right:523.726px;top:435.15px;font-size:8.7px;color:#050505;letter-spacing:-0.536px;">26</div>
<div class="t" style="left:386.667px;top:445.85px;width:20px;text-align:center;font-size:8.7px;color:#050505;letter-spacing:-0.486px;">18</div>
<div class="t" style="right:609.226px;top:445.85px;font-size:8.7px;color:#050505;letter-spacing:-0.536px;">27</div>
<div class="t" style="right:594.976px;top:445.85px;font-size:8.7px;color:#050505;letter-spacing:-0.536px;">28</div>
<div class="t" style="right:580.726px;top:445.85px;font-size:8.7px;color:#050505;letter-spacing:-0.536px;">29</div>
<div class="t" style="right:566.476px;top:445.85px;font-size:8.7px;color:#050505;letter-spacing:-0.536px;">30</div>
<div class="t" style="left:516.005px;top:375.95px;width:100px;text-align:center;font-size:8.7px;color:#050505;letter-spacing:-0.349px;">květen 2009</div>
<div class="t" style="left:521.237px;top:391.85px;width:16px;text-align:center;font-size:8.7px;color:#050505;letter-spacing:-0.086px;">po</div>
<div class="t" style="left:535.717px;top:391.85px;width:16px;text-align:center;font-size:8.7px;color:#050505;letter-spacing:0.375px;">út</div>
<div class="t" style="left:549.838px;top:391.85px;width:16px;text-align:center;font-size:8.7px;color:#050505;letter-spacing:0.117px;">st</div>
<div class="t" style="left:564.088px;top:391.85px;width:16px;text-align:center;font-size:8.7px;color:#050505;letter-spacing:0.117px;">čt</div>
<div class="t" style="left:578.112px;top:391.85px;width:16px;text-align:center;font-size:8.7px;color:#050505;letter-spacing:-0.336px;">pá</div>
<div class="t" style="left:592.383px;top:391.85px;width:16px;text-align:center;font-size:8.7px;color:#050505;letter-spacing:-0.294px;">so</div>
<div class="t" style="left:606.562px;top:391.85px;width:16px;text-align:center;font-size:8.7px;color:#050505;letter-spacing:-0.436px;">ne</div>
<div class="a" style="left:521.18px;top:404.2px;width:1px;height:48.5px;background:#444;"></div>
<div class="t" style="left:504.637px;top:403.15px;width:20px;text-align:center;font-size:8.7px;color:#050505;letter-spacing:-0.486px;">18</div>
<div class="t" style="right:434.164px;top:403.15px;font-size:8.7px;color:#050505;letter-spacing:-0.444px;">1</div>
<div class="t" style="right:419.914px;top:403.15px;font-size:8.7px;color:#050505;letter-spacing:-0.444px;">2</div>
<div class="t" style="right:405.664px;top:403.15px;font-size:8.7px;color:#050505;letter-spacing:-0.444px;">3</div>
<div class="t" style="left:504.637px;top:413.85px;width:20px;text-align:center;font-size:8.7px;color:#050505;letter-spacing:-0.486px;">19</div>
<div class="t" style="right:491.164px;top:413.85px;font-size:8.7px;color:#050505;letter-spacing:-0.444px;">4</div>
<div class="t" style="right:476.914px;top:413.85px;font-size:8.7px;color:#050505;letter-spacing:-0.444px;">5</div>
<div class="t" style="right:462.664px;top:413.85px;font-size:8.7px;color:#050505;letter-spacing:-0.444px;">6</div>
<div class="t" style="right:448.414px;top:413.85px;font-size:8.7px;color:#050505;letter-spacing:-0.444px;">7</div>
<div class="t" style="right:434.164px;top:413.85px;font-size:8.7px;color:#050505;letter-spacing:-0.444px;">8</div>
<div class="t" style="right:419.914px;top:413.85px;font-size:8.7px;color:#050505;letter-spacing:-0.444px;">9</div>
<div class="t" style="right:405.756px;top:413.85px;font-size:8.7px;color:#050505;letter-spacing:-0.536px;">10</div>
<div class="t" style="left:504.637px;top:424.55px;width:20px;text-align:center;font-size:8.7px;color:#050505;letter-spacing:-0.486px;">20</div>
<div class="t" style="right:490.936px;top:424.55px;font-size:8.7px;color:#050505;letter-spacing:-0.216px;">11</div>
<div class="t" style="right:477.006px;top:424.55px;font-size:8.7px;color:#050505;letter-spacing:-0.536px;">12</div>
<div class="t" style="right:462.756px;top:424.55px;font-size:8.7px;color:#050505;letter-spacing:-0.536px;">13</div>
<div class="t" style="right:448.506px;top:424.55px;font-size:8.7px;color:#050505;letter-spacing:-0.536px;">14</div>
<div class="t" style="right:434.256px;top:424.55px;font-size:8.7px;color:#050505;letter-spacing:-0.536px;">15</div>
<div class="t" style="right:420.006px;top:424.55px;font-size:8.7px;color:#050505;letter-spacing:-0.536px;">16</div>
<div class="t" style="right:405.756px;top:424.55px;font-size:8.7px;color:#050505;letter-spacing:-0.536px;">17</div>
<div class="t" style="left:504.637px;top:435.15px;width:20px;text-align:center;font-size:8.7px;color:#050505;letter-spacing:-0.486px;">21</div>
<div class="t" style="right:491.256px;top:435.15px;font-size:8.7px;color:#050505;letter-spacing:-0.536px;">18</div>
<div class="t" style="right:477.006px;top:435.15px;font-size:8.7px;color:#050505;letter-spacing:-0.536px;">19</div>
<div class="t" style="right:462.756px;top:435.15px;font-size:8.7px;color:#050505;letter-spacing:-0.536px;">20</div>
<div class="t" style="right:448.506px;top:435.15px;font-size:8.7px;color:#050505;letter-spacing:-0.536px;">21</div>
<div class="t" style="right:434.256px;top:435.15px;font-size:8.7px;color:#050505;letter-spacing:-0.536px;">22</div>
<div class="t" style="right:420.006px;top:435.15px;font-size:8.7px;color:#050505;letter-spacing:-0.536px;">23</div>
<div class="t" style="right:405.756px;top:435.15px;font-size:8.7px;color:#050505;letter-spacing:-0.536px;">24</div>
<div class="t" style="left:504.637px;top:445.85px;width:20px;text-align:center;font-size:8.7px;color:#050505;letter-spacing:-0.486px;">22</div>
<div class="t" style="right:491.256px;top:445.85px;font-size:8.7px;color:#050505;letter-spacing:-0.536px;">25</div>
<div class="t" style="right:477.006px;top:445.85px;font-size:8.7px;color:#050505;letter-spacing:-0.536px;">26</div>
<div class="t" style="right:462.756px;top:445.85px;font-size:8.7px;color:#050505;letter-spacing:-0.536px;">27</div>
<div class="t" style="right:448.506px;top:445.85px;font-size:8.7px;color:#050505;letter-spacing:-0.536px;">28</div>
<div class="t" style="right:434.256px;top:445.85px;font-size:8.7px;color:#050505;letter-spacing:-0.536px;">29</div>
<div class="t" style="right:420.006px;top:445.85px;font-size:8.7px;color:#050505;letter-spacing:-0.536px;">30</div>
<div class="t" style="right:405.756px;top:445.85px;font-size:8.7px;color:#050505;letter-spacing:-0.536px;">31</div>
<div class="t" style="left:633.93px;top:375.95px;width:100px;text-align:center;font-size:8.7px;color:#050505;letter-spacing:-0.439px;">červen 2009</div>
<div class="t" style="left:639.207px;top:391.85px;width:16px;text-align:center;font-size:8.7px;color:#050505;letter-spacing:-0.086px;">po</div>
<div class="t" style="left:653.688px;top:391.85px;width:16px;text-align:center;font-size:8.7px;color:#050505;letter-spacing:0.375px;">út</div>
<div class="t" style="left:667.808px;top:391.85px;width:16px;text-align:center;font-size:8.7px;color:#050505;letter-spacing:0.117px;">st</div>
<div class="t" style="left:682.058px;top:391.85px;width:16px;text-align:center;font-size:8.7px;color:#050505;letter-spacing:0.117px;">čt</div>
<div class="t" style="left:696.082px;top:391.85px;width:16px;text-align:center;font-size:8.7px;color:#050505;letter-spacing:-0.336px;">pá</div>
<div class="t" style="left:710.353px;top:391.85px;width:16px;text-align:center;font-size:8.7px;color:#050505;letter-spacing:-0.294px;">so</div>
<div class="t" style="left:724.532px;top:391.85px;width:16px;text-align:center;font-size:8.7px;color:#050505;letter-spacing:-0.436px;">ne</div>
<div class="a" style="left:639.15px;top:404.2px;width:1px;height:59.2px;background:#444;"></div>
<div class="t" style="left:622.607px;top:413.85px;width:20px;text-align:center;font-size:8.7px;color:#050505;letter-spacing:-0.486px;">23</div>
<div class="t" style="right:373.194px;top:413.85px;font-size:8.7px;color:#050505;letter-spacing:-0.444px;">1</div>
<div class="t" style="right:358.944px;top:413.85px;font-size:8.7px;color:#050505;letter-spacing:-0.444px;">2</div>
<div class="t" style="right:344.694px;top:413.85px;font-size:8.7px;color:#050505;letter-spacing:-0.444px;">3</div>
<div class="t" style="right:330.444px;top:413.85px;font-size:8.7px;color:#050505;letter-spacing:-0.444px;">4</div>
<div class="t" style="right:316.194px;top:413.85px;font-size:8.7px;color:#050505;letter-spacing:-0.444px;">5</div>
<div class="t" style="right:301.944px;top:413.85px;font-size:8.7px;color:#050505;letter-spacing:-0.444px;">6</div>
<div class="t" style="right:287.694px;top:413.85px;font-size:8.7px;color:#050505;letter-spacing:-0.444px;">7</div>
<div class="t" style="left:622.607px;top:424.55px;width:20px;text-align:center;font-size:8.7px;color:#050505;letter-spacing:-0.486px;">24</div>
<div class="t" style="right:373.194px;top:424.55px;font-size:8.7px;color:#050505;letter-spacing:-0.444px;">8</div>
<div class="t" style="right:358.944px;top:424.55px;font-size:8.7px;color:#050505;letter-spacing:-0.444px;">9</div>
<div class="t" style="right:344.786px;top:424.55px;font-size:8.7px;color:#050505;letter-spacing:-0.536px;">10</div>
<div class="t" style="right:330.216px;top:424.55px;font-size:8.7px;color:#050505;letter-spacing:-0.216px;">11</div>
<div class="t" style="right:316.286px;top:424.55px;font-size:8.7px;color:#050505;letter-spacing:-0.536px;">12</div>
<div class="t" style="right:302.036px;top:424.55px;font-size:8.7px;color:#050505;letter-spacing:-0.536px;">13</div>
<div class="t" style="right:287.786px;top:424.55px;font-size:8.7px;color:#050505;letter-spacing:-0.536px;">14</div>
<div class="t" style="left:622.607px;top:435.15px;width:20px;text-align:center;font-size:8.7px;color:#050505;letter-spacing:-0.486px;">25</div>
<div class="t" style="right:373.286px;top:435.15px;font-size:8.7px;color:#050505;letter-spacing:-0.536px;">15</div>
<div class="t" style="right:359.036px;top:435.15px;font-size:8.7px;color:#050505;letter-spacing:-0.536px;">16</div>
<div class="t" style="right:344.786px;top:435.15px;font-size:8.7px;color:#050505;letter-spacing:-0.536px;">17</div>
<div class="t" style="right:330.536px;top:435.15px;font-size:8.7px;color:#050505;letter-spacing:-0.536px;">18</div>
<div class="t" style="right:316.286px;top:435.15px;font-size:8.7px;color:#050505;letter-spacing:-0.536px;">19</div>
<div class="t" style="right:302.036px;top:435.15px;font-size:8.7px;color:#050505;letter-spacing:-0.536px;">20</div>
<div class="t" style="right:287.786px;top:435.15px;font-size:8.7px;color:#050505;letter-spacing:-0.536px;">21</div>
<div class="t" style="left:622.607px;top:445.85px;width:20px;text-align:center;font-size:8.7px;color:#050505;letter-spacing:-0.486px;">26</div>
<div class="t" style="right:373.286px;top:445.85px;font-size:8.7px;color:#050505;letter-spacing:-0.536px;">22</div>
<div class="t" style="right:359.036px;top:445.85px;font-size:8.7px;color:#050505;letter-spacing:-0.536px;">23</div>
<div class="t" style="right:344.786px;top:445.85px;font-size:8.7px;color:#050505;letter-spacing:-0.536px;">24</div>
<div class="t" style="right:330.536px;top:445.85px;font-size:8.7px;color:#050505;letter-spacing:-0.536px;">25</div>
<div class="t" style="right:316.286px;top:445.85px;font-size:8.7px;color:#050505;letter-spacing:-0.536px;">26</div>
<div class="t" style="right:302.036px;top:445.85px;font-size:8.7px;color:#050505;letter-spacing:-0.536px;">27</div>
<div class="t" style="right:287.786px;top:445.85px;font-size:8.7px;color:#050505;letter-spacing:-0.536px;">28</div>
<div class="t" style="left:622.607px;top:456.55px;width:20px;text-align:center;font-size:8.7px;color:#050505;letter-spacing:-0.486px;">27</div>
<div class="t" style="right:373.286px;top:456.55px;font-size:8.7px;color:#050505;letter-spacing:-0.536px;">29</div>
<div class="t" style="right:359.036px;top:456.55px;font-size:8.7px;color:#050505;letter-spacing:-0.536px;">30</div>
<div class="t" style="left:751.927px;top:375.95px;width:100px;text-align:center;font-size:8.7px;color:#050505;letter-spacing:-0.385px;">červenec 2009</div>
<div class="t" style="left:757.177px;top:391.85px;width:16px;text-align:center;font-size:8.7px;color:#050505;letter-spacing:-0.086px;">po</div>
<div class="t" style="left:771.657px;top:391.85px;width:16px;text-align:center;font-size:8.7px;color:#050505;letter-spacing:0.375px;">út</div>
<div class="t" style="left:785.778px;top:391.85px;width:16px;text-align:center;font-size:8.7px;color:#050505;letter-spacing:0.117px;">st</div>
<div class="t" style="left:800.028px;top:391.85px;width:16px;text-align:center;font-size:8.7px;color:#050505;letter-spacing:0.117px;">čt</div>
<div class="t" style="left:814.052px;top:391.85px;width:16px;text-align:center;font-size:8.7px;color:#050505;letter-spacing:-0.336px;">pá</div>
<div class="t" style="left:828.323px;top:391.85px;width:16px;text-align:center;font-size:8.7px;color:#050505;letter-spacing:-0.294px;">so</div>
<div class="t" style="left:842.502px;top:391.85px;width:16px;text-align:center;font-size:8.7px;color:#050505;letter-spacing:-0.436px;">ne</div>
<div class="a" style="left:757.12px;top:404.2px;width:1px;height:48.5px;background:#444;"></div>
<div class="t" style="left:740.577px;top:403.15px;width:20px;text-align:center;font-size:8.7px;color:#050505;letter-spacing:-0.486px;">27</div>
<div class="t" style="right:226.724px;top:403.15px;font-size:8.7px;color:#050505;letter-spacing:-0.444px;">1</div>
<div class="t" style="right:212.474px;top:403.15px;font-size:8.7px;color:#050505;letter-spacing:-0.444px;">2</div>
<div class="t" style="right:198.224px;top:403.15px;font-size:8.7px;color:#050505;letter-spacing:-0.444px;">3</div>
<div class="t" style="right:183.974px;top:403.15px;font-size:8.7px;color:#050505;letter-spacing:-0.444px;">4</div>
<div class="t" style="right:169.724px;top:403.15px;font-size:8.7px;color:#050505;letter-spacing:-0.444px;">5</div>
<div class="t" style="left:740.577px;top:413.85px;width:20px;text-align:center;font-size:8.7px;color:#050505;letter-spacing:-0.486px;">28</div>
<div class="t" style="right:255.224px;top:413.85px;font-size:8.7px;color:#050505;letter-spacing:-0.444px;">6</div>
<div class="t" style="right:240.974px;top:413.85px;font-size:8.7px;color:#050505;letter-spacing:-0.444px;">7</div>
<div class="t" style="right:226.724px;top:413.85px;font-size:8.7px;color:#050505;letter-spacing:-0.444px;">8</div>
<div class="t" style="right:212.474px;top:413.85px;font-size:8.7px;color:#050505;letter-spacing:-0.444px;">9</div>
<div class="t" style="right:198.316px;top:413.85px;font-size:8.7px;color:#050505;letter-spacing:-0.536px;">10</div>
<div class="t" style="right:183.746px;top:413.85px;font-size:8.7px;color:#050505;letter-spacing:-0.216px;">11</div>
<div class="t" style="right:169.816px;top:413.85px;font-size:8.7px;color:#050505;letter-spacing:-0.536px;">12</div>
<div class="t" style="left:740.577px;top:424.55px;width:20px;text-align:center;font-size:8.7px;color:#050505;letter-spacing:-0.486px;">29</div>
<div class="t" style="right:255.316px;top:424.55px;font-size:8.7px;color:#050505;letter-spacing:-0.536px;">13</div>
<div class="t" style="right:241.066px;top:424.55px;font-size:8.7px;color:#050505;letter-spacing:-0.536px;">14</div>
<div class="t" style="right:226.816px;top:424.55px;font-size:8.7px;color:#050505;letter-spacing:-0.536px;">15</div>
<div class="t" style="right:212.566px;top:424.55px;font-size:8.7px;color:#050505;letter-spacing:-0.536px;">16</div>
<div class="t" style="right:198.316px;top:424.55px;font-size:8.7px;color:#050505;letter-spacing:-0.536px;">17</div>
<div class="t" style="right:184.066px;top:424.55px;font-size:8.7px;color:#050505;letter-spacing:-0.536px;">18</div>
<div class="t" style="right:169.816px;top:424.55px;font-size:8.7px;color:#050505;letter-spacing:-0.536px;">19</div>
<div class="t" style="left:740.577px;top:435.15px;width:20px;text-align:center;font-size:8.7px;color:#050505;letter-spacing:-0.486px;">30</div>
<div class="t" style="right:255.316px;top:435.15px;font-size:8.7px;color:#050505;letter-spacing:-0.536px;">20</div>
<div class="t" style="right:241.066px;top:435.15px;font-size:8.7px;color:#050505;letter-spacing:-0.536px;">21</div>
<div class="t" style="right:226.816px;top:435.15px;font-size:8.7px;color:#050505;letter-spacing:-0.536px;">22</div>
<div class="t" style="right:212.566px;top:435.15px;font-size:8.7px;color:#050505;letter-spacing:-0.536px;">23</div>
<div class="t" style="right:198.316px;top:435.15px;font-size:8.7px;color:#050505;letter-spacing:-0.536px;">24</div>
<div class="t" style="right:184.066px;top:435.15px;font-size:8.7px;color:#050505;letter-spacing:-0.536px;">25</div>
<div class="t" style="right:169.816px;top:435.15px;font-size:8.7px;color:#050505;letter-spacing:-0.536px;">26</div>
<div class="t" style="left:740.577px;top:445.85px;width:20px;text-align:center;font-size:8.7px;color:#050505;letter-spacing:-0.486px;">31</div>
<div class="t" style="right:255.316px;top:445.85px;font-size:8.7px;color:#050505;letter-spacing:-0.536px;">27</div>
<div class="t" style="right:241.066px;top:445.85px;font-size:8.7px;color:#050505;letter-spacing:-0.536px;">28</div>
<div class="t" style="right:226.816px;top:445.85px;font-size:8.7px;color:#050505;letter-spacing:-0.536px;">29</div>
<div class="t" style="right:212.566px;top:445.85px;font-size:8.7px;color:#050505;letter-spacing:-0.536px;">30</div>
<div class="t" style="right:198.316px;top:445.85px;font-size:8.7px;color:#050505;letter-spacing:-0.536px;">31</div>
<div class="t" style="left:869.891px;top:375.95px;width:100px;text-align:center;font-size:8.7px;color:#050505;letter-spacing:-0.398px;">srpen 2009</div>
<div class="t" style="left:875.147px;top:391.85px;width:16px;text-align:center;font-size:8.7px;color:#050505;letter-spacing:-0.086px;">po</div>
<div class="t" style="left:889.627px;top:391.85px;width:16px;text-align:center;font-size:8.7px;color:#050505;letter-spacing:0.375px;">út</div>
<div class="t" style="left:903.748px;top:391.85px;width:16px;text-align:center;font-size:8.7px;color:#050505;letter-spacing:0.117px;">st</div>
<div class="t" style="left:917.998px;top:391.85px;width:16px;text-align:center;font-size:8.7px;color:#050505;letter-spacing:0.117px;">čt</div>
<div class="t" style="left:932.022px;top:391.85px;width:16px;text-align:center;font-size:8.7px;color:#050505;letter-spacing:-0.336px;">pá</div>
<div class="t" style="left:946.293px;top:391.85px;width:16px;text-align:center;font-size:8.7px;color:#050505;letter-spacing:-0.294px;">so</div>
<div class="t" style="left:960.472px;top:391.85px;width:16px;text-align:center;font-size:8.7px;color:#050505;letter-spacing:-0.436px;">ne</div>
<div class="a" style="left:875.09px;top:404.2px;width:1px;height:59.2px;background:#444;"></div>
<div class="t" style="left:858.547px;top:403.15px;width:20px;text-align:center;font-size:8.7px;color:#050505;letter-spacing:-0.486px;">31</div>
<div class="t" style="right:66.004px;top:403.15px;font-size:8.7px;color:#050505;letter-spacing:-0.444px;">1</div>
<div class="t" style="right:51.754px;top:403.15px;font-size:8.7px;color:#050505;letter-spacing:-0.444px;">2</div>
<div class="t" style="left:858.547px;top:413.85px;width:20px;text-align:center;font-size:8.7px;color:#050505;letter-spacing:-0.486px;">32</div>
<div class="t" style="right:137.254px;top:413.85px;font-size:8.7px;color:#050505;letter-spacing:-0.444px;">3</div>
<div class="t" style="right:123.004px;top:413.85px;font-size:8.7px;color:#050505;letter-spacing:-0.444px;">4</div>
<div class="t" style="right:108.754px;top:413.85px;font-size:8.7px;color:#050505;letter-spacing:-0.444px;">5</div>
<div class="t" style="right:94.504px;top:413.85px;font-size:8.7px;color:#050505;letter-spacing:-0.444px;">6</div>
<div class="t" style="right:80.254px;top:413.85px;font-size:8.7px;color:#050505;letter-spacing:-0.444px;">7</div>
<div class="t" style="right:66.004px;top:413.85px;font-size:8.7px;color:#050505;letter-spacing:-0.444px;">8</div>
<div class="t" style="right:51.754px;top:413.85px;font-size:8.7px;color:#050505;letter-spacing:-0.444px;">9</div>
<div class="t" style="left:858.547px;top:424.55px;width:20px;text-align:center;font-size:8.7px;color:#050505;letter-spacing:-0.486px;">33</div>
<div class="t" style="right:137.346px;top:424.55px;font-size:8.7px;color:#050505;letter-spacing:-0.536px;">10</div>
<div class="t" style="right:122.776px;top:424.55px;font-size:8.7px;color:#050505;letter-spacing:-0.216px;">11</div>
<div class="t" style="right:108.846px;top:424.55px;font-size:8.7px;color:#050505;letter-spacing:-0.536px;">12</div>
<div class="t" style="right:94.596px;top:424.55px;font-size:8.7px;color:#050505;letter-spacing:-0.536px;">13</div>
<div class="t" style="right:80.346px;top:424.55px;font-size:8.7px;color:#050505;letter-spacing:-0.536px;">14</div>
<div class="t" style="right:66.096px;top:424.55px;font-size:8.7px;color:#050505;letter-spacing:-0.536px;">15</div>
<div class="t" style="right:51.846px;top:424.55px;font-size:8.7px;color:#050505;letter-spacing:-0.536px;">16</div>
<div class="t" style="left:858.547px;top:435.15px;width:20px;text-align:center;font-size:8.7px;color:#050505;letter-spacing:-0.486px;">34</div>
<div class="t" style="right:137.346px;top:435.15px;font-size:8.7px;color:#050505;letter-spacing:-0.536px;">17</div>
<div class="t" style="right:123.096px;top:435.15px;font-size:8.7px;color:#050505;letter-spacing:-0.536px;">18</div>
<div class="t" style="right:108.846px;top:435.15px;font-size:8.7px;color:#050505;letter-spacing:-0.536px;">19</div>
<div class="t" style="right:94.596px;top:435.15px;font-size:8.7px;color:#050505;letter-spacing:-0.536px;">20</div>
<div class="t" style="right:80.346px;top:435.15px;font-size:8.7px;color:#050505;letter-spacing:-0.536px;">21</div>
<div class="t" style="right:66.096px;top:435.15px;font-size:8.7px;color:#050505;letter-spacing:-0.536px;">22</div>
<div class="t" style="right:51.846px;top:435.15px;font-size:8.7px;color:#050505;letter-spacing:-0.536px;">23</div>
<div class="t" style="left:858.547px;top:445.85px;width:20px;text-align:center;font-size:8.7px;color:#050505;letter-spacing:-0.486px;">35</div>
<div class="t" style="right:137.346px;top:445.85px;font-size:8.7px;color:#050505;letter-spacing:-0.536px;">24</div>
<div class="t" style="right:123.096px;top:445.85px;font-size:8.7px;color:#050505;letter-spacing:-0.536px;">25</div>
<div class="t" style="right:108.846px;top:445.85px;font-size:8.7px;color:#050505;letter-spacing:-0.536px;">26</div>
<div class="t" style="right:94.596px;top:445.85px;font-size:8.7px;color:#050505;letter-spacing:-0.536px;">27</div>
<div class="t" style="right:80.346px;top:445.85px;font-size:8.7px;color:#050505;letter-spacing:-0.536px;">28</div>
<div class="t" style="right:66.096px;top:445.85px;font-size:8.7px;color:#050505;letter-spacing:-0.536px;">29</div>
<div class="t" style="right:51.846px;top:445.85px;font-size:8.7px;color:#050505;letter-spacing:-0.536px;">30</div>
<div class="t" style="left:858.547px;top:456.55px;width:20px;text-align:center;font-size:8.7px;color:#050505;letter-spacing:-0.486px;">36</div>
<div class="t" style="right:137.346px;top:456.55px;font-size:8.7px;color:#050505;letter-spacing:-0.536px;">31</div>
<div class="t" style="right:123.004px;top:456.55px;font-size:8.7px;color:#686868;letter-spacing:-0.444px;">1</div>
<div class="t" style="right:108.754px;top:456.55px;font-size:8.7px;color:#686868;letter-spacing:-0.444px;">2</div>
<div class="t" style="right:94.504px;top:456.55px;font-size:8.7px;color:#686868;letter-spacing:-0.444px;">3</div>
<div class="t" style="right:80.254px;top:456.55px;font-size:8.7px;color:#686868;letter-spacing:-0.444px;">4</div>
<div class="t" style="right:66.004px;top:456.55px;font-size:8.7px;color:#686868;letter-spacing:-0.444px;">5</div>
<div class="t" style="right:51.754px;top:456.55px;font-size:8.7px;color:#686868;letter-spacing:-0.444px;">6</div>
<div class="a" style="left:40.7px;top:467.3px;width:12px;height:9.4px;background:#f2f8fc;border:1px solid #3c4e62;border-radius:1.5px;"></div>
<div class="t" style="left:56.9px;top:467.75px;font-size:8.7px;color:#050505;letter-spacing:-0.491px;">Dnes: 12.1.2009</div>
<div class="t" style="left:940.6px;top:471.9px;font-size:17px;color:#b8b8b8;letter-spacing:0.27px;opacity:0.8;-webkit-text-stroke:0;">studna.cz</div>
</body></html>
